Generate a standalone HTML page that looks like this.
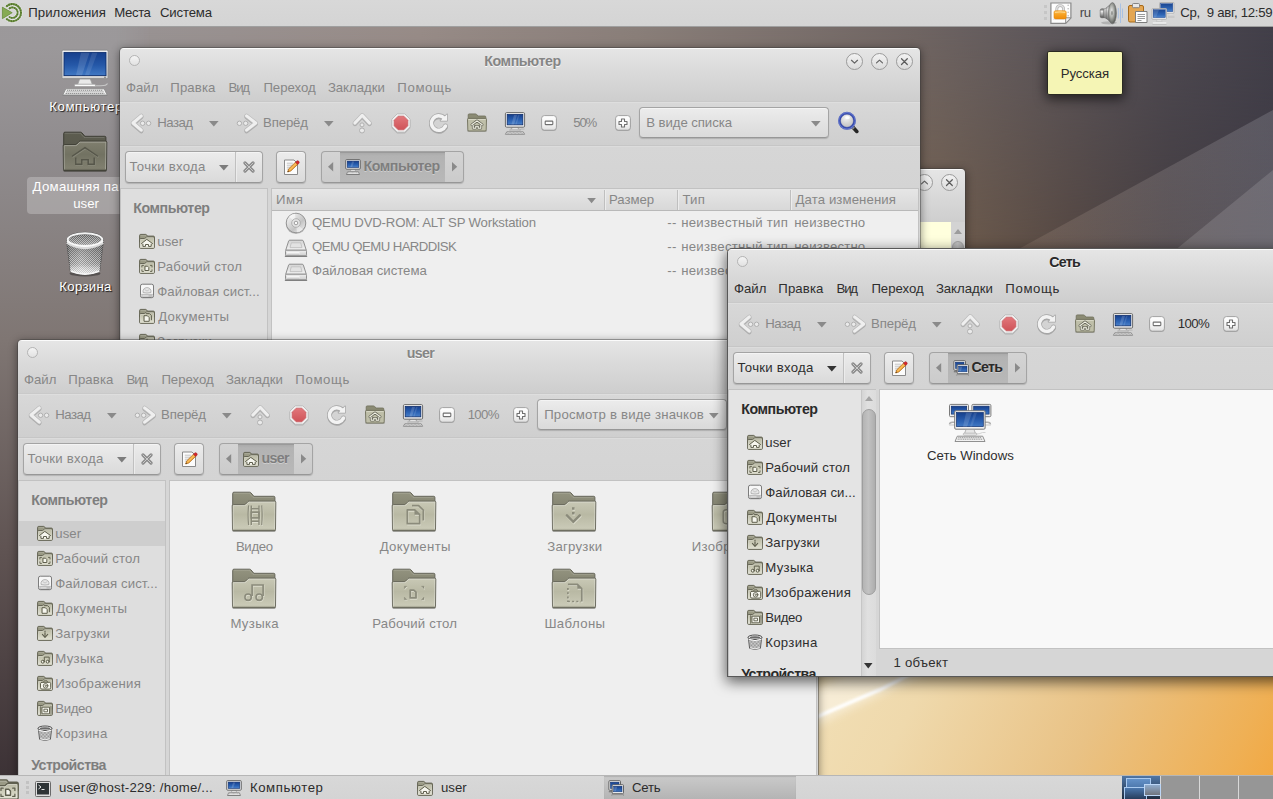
<!DOCTYPE html>
<html lang="ru"><head><meta charset="utf-8"><title>Desktop</title>
<style>
html,body{margin:0;padding:0;}
body{width:1273px;height:799px;overflow:hidden;position:relative;background:#6b625f;
 font-family:"Liberation Sans",sans-serif;font-size:13.2px;line-height:20px;color:#8b8b8b;}
.t{position:absolute;white-space:pre;line-height:20px;height:20px;}
.i{position:absolute;overflow:visible;}
div{box-sizing:border-box;}
.abs{position:absolute;}
.win{position:absolute;overflow:hidden;border-radius:4px 4px 0 0;
 background:linear-gradient(#fbfbfb 0px,#fbfbfb 1px,#e5e5e5 1.5px,#dadada 24px,#cecece 53px);
 box-shadow:0 0 0 1px rgba(60,60,60,.42),0 2px 9px 1px rgba(0,0,0,.42);}
.win.act{box-shadow:0 0 0 1px #585858,0 4px 14px 2px rgba(0,0,0,.6);}
.win .tb{position:absolute;left:0;right:0;top:53px;height:44px;border-top:1px solid #c9c9c9;
 background:linear-gradient(#d8d8d8,#cfcfcf);box-shadow:inset 0 1px 0 #dedede;}
.win .lb{position:absolute;left:0;right:0;top:97px;height:43px;border-top:1px solid #c6c6c6;
 background:linear-gradient(#d6d6d6,#d4d4d4);box-shadow:inset 0 1px 0 #dcdcdc;}
.win .body{position:absolute;left:0;right:0;top:140px;bottom:0;background:#d6d6d6;}
.btn{position:absolute;border:1px solid #a4a4a4;border-bottom-color:#979797;border-radius:4px;
 background:linear-gradient(#ececec,#dadada);box-shadow:inset 0 1px 0 #f4f4f4,0 1px 1px rgba(0,0,0,.16);}
.wb{position:absolute;width:17px;height:17px;border-radius:50%;border:1px solid #9a9a9a;
 background:linear-gradient(#f2f2f2,#dcdcdc);}
.wm{position:absolute;width:11px;height:11px;border-radius:50%;border:1px solid #b4b4b4;
 background:linear-gradient(#f4f4f4,#e2e2e2);}
.side{position:absolute;background:#dedede;border:1px solid #c2c2c2;border-bottom:none;overflow:hidden;}
.main{position:absolute;background:#efefef;border:1px solid #c2c2c2;overflow:hidden;}
.act .side{background:#e4e4e4;}
.act .main{background:#f8f8f8;}
.hdr{position:absolute;height:22px;border-bottom:1px solid #b9b9b9;
 background:linear-gradient(#e6e6e6,#d8d8d8);}
.hdr i{position:absolute;top:1px;bottom:1px;width:1px;background:#c4c4c4;box-shadow:1px 0 0 #ededed;}
.panel{position:absolute;left:0;width:1273px;background:linear-gradient(#d8d8d8,#d4d4d4);}
</style></head><body>
<svg width="0" height="0" style="position:absolute"><defs>
<symbol id="wb_min" viewBox="0 0 17 17"><path d="M5.500 7.300 L8.500 10.100 L11.500 7.300" fill="none" stroke="#666" stroke-width="1.250" stroke-linecap="round" stroke-linejoin="round"/></symbol>
<symbol id="wb_max" viewBox="0 0 17 17"><path d="M5.500 9.900 L8.500 7.100 L11.500 9.900" fill="none" stroke="#666" stroke-width="1.250" stroke-linecap="round" stroke-linejoin="round"/></symbol>
<symbol id="wb_close" viewBox="0 0 17 17"><path d="M5.500 5.700 L11.300 11.500 M11.300 5.700 L5.500 11.500" fill="none" stroke="#5c5c5c" stroke-width="1.250" stroke-linecap="round"/></symbol>
<symbol id="back" viewBox="0 0 24 24"><circle cx="13.6" cy="12.3" r="2.2" fill="#eaeaea" stroke="#b0b0b0" stroke-width="1"/><circle cx="19.6" cy="12.3" r="2.2" fill="#eaeaea" stroke="#b0b0b0" stroke-width="1"/><path d="M12.300 4.900 L4 12 L12.300 19.100" fill="none" stroke-linecap="round" stroke-linejoin="round" stroke="#7c7c7c" stroke-opacity=".45" stroke-width="4.400" transform="translate(0,1)"/><path d="M12.300 4.900 L4 12 L12.300 19.100" fill="none" stroke-linecap="round" stroke-linejoin="round" stroke="#bbbbbb" stroke-width="4.500"/><path d="M12.300 4.900 L4 12 L12.300 19.100" fill="none" stroke-linecap="round" stroke-linejoin="round" stroke="#efefef" stroke-width="3.100"/></symbol>
<symbol id="fwd" viewBox="0 0 24 24"><circle cx="4.4" cy="12.3" r="2.2" fill="#eaeaea" stroke="#b0b0b0" stroke-width="1"/><circle cx="10.7" cy="12.3" r="2.2" fill="#eaeaea" stroke="#b0b0b0" stroke-width="1"/><path d="M11.600 4.900 L20.700 12 L11.600 19.100" fill="none" stroke-linecap="round" stroke-linejoin="round" stroke="#7c7c7c" stroke-opacity=".45" stroke-width="4.400" transform="translate(0,1)"/><path d="M11.600 4.900 L20.700 12 L11.600 19.100" fill="none" stroke-linecap="round" stroke-linejoin="round" stroke="#bbbbbb" stroke-width="4.500"/><path d="M11.600 4.900 L20.700 12 L11.600 19.100" fill="none" stroke-linecap="round" stroke-linejoin="round" stroke="#efefef" stroke-width="3.100"/></symbol>
<symbol id="up" viewBox="0 0 24 24"><circle cx="12" cy="13.9" r="2" fill="#eaeaea" stroke="#b0b0b0" stroke-width="1"/><path d="M4.900 12 L12.200 4.300 L19.500 12" fill="none" stroke-linecap="round" stroke-linejoin="round" stroke="#7c7c7c" stroke-opacity=".45" stroke-width="4.400" transform="translate(0,1)"/><path d="M4.900 12 L12.200 4.300 L19.500 12" fill="none" stroke-linecap="round" stroke-linejoin="round" stroke="#bbbbbb" stroke-width="4.500"/><path d="M4.900 12 L12.200 4.300 L19.500 12" fill="none" stroke-linecap="round" stroke-linejoin="round" stroke="#efefef" stroke-width="3.100"/><circle cx="12" cy="19.5" r="2.5" fill="#eaeaea" stroke="#b0b0b0" stroke-width="1"/></symbol>
<symbol id="stop" viewBox="0 0 24 24"><defs><linearGradient id="stg" x1="0" y1="0" x2="0" y2="1"><stop offset="0" stop-color="#e2777b"/><stop offset="1" stop-color="#cf5358"/></linearGradient></defs><path d="M21.40 15.89 L15.89 21.40 L8.11 21.40 L2.60 15.89 L2.60 8.11 L8.11 2.60 L15.89 2.60 L21.40 8.11Z" fill="#777" opacity=".35" transform="translate(0,1)"/><path d="M21.20 15.81 L15.81 21.20 L8.19 21.20 L2.80 15.81 L2.80 8.19 L8.19 2.80 L15.81 2.80 L21.20 8.19Z" fill="#efefef" stroke="#b9b9b9" stroke-width=".9" stroke-linejoin="round"/><path d="M18.80 14.82 L14.82 18.80 L9.18 18.80 L5.20 14.82 L5.20 9.18 L9.18 5.20 L14.82 5.20 L18.80 9.18Z" fill="url(#stg)" stroke="#c9575c" stroke-width=".7" stroke-linejoin="round"/></symbol>
<symbol id="reload" viewBox="0 0 24 24"><g transform="translate(0,1.2)" opacity=".38"><path d="M18.47 14.97 A7.30 7.30 0 1 1 17.22 7.12" fill="none" stroke="#666" stroke-width="4.600"/><circle cx="18.47" cy="14.97" r="2.300" fill="#666"/></g><path d="M18.47 14.97 A7.30 7.30 0 1 1 17.22 7.12" fill="none" stroke="#a4a4a4" stroke-width="4.700"/><circle cx="18.47" cy="14.97" r="2.350" fill="#a4a4a4"/><path d="M20.1 3.2 L20.1 9.800 L13.4 9.800 Z" fill="#f3f3f3" stroke="#a4a4a4" stroke-width="1.500" stroke-linejoin="round"/><path d="M18.47 14.97 A7.30 7.30 0 1 1 17.22 7.12" fill="none" stroke="#f3f3f3" stroke-width="3.500"/><circle cx="18.47" cy="14.97" r="1.750" fill="#f3f3f3"/><path d="M20.1 3.2 L20.1 9.800 L13.4 9.800 Z" fill="#f3f3f3"/></symbol>
<symbol id="zout" viewBox="0 0 16 16"><defs><linearGradient id="zg" x1="0" y1="0" x2="0" y2="1"><stop offset="0" stop-color="#ffffff"/><stop offset=".6" stop-color="#f4f4f4"/><stop offset="1" stop-color="#dedede"/></linearGradient></defs><rect x=".6" y="1.200" width="14.800" height="14.800" rx="3" fill="#6a6a6a" opacity=".45"/><rect x=".6" y=".6" width="14.800" height="14.600" rx="2.800" fill="url(#zg)" stroke="#9a9a9a" stroke-width=".9"/><rect x="4.200" y="6.100" width="7.600" height="3.500" rx=".6" fill="#fdfdfd" stroke="#6f6f6f" stroke-width="1.100"/></symbol>
<symbol id="zin" viewBox="0 0 16 16"><defs><linearGradient id="zg" x1="0" y1="0" x2="0" y2="1"><stop offset="0" stop-color="#ffffff"/><stop offset=".6" stop-color="#f4f4f4"/><stop offset="1" stop-color="#dedede"/></linearGradient></defs><rect x=".6" y="1.200" width="14.800" height="14.800" rx="3" fill="#6a6a6a" opacity=".45"/><rect x=".6" y=".6" width="14.800" height="14.600" rx="2.800" fill="url(#zg)" stroke="#9a9a9a" stroke-width=".9"/><path d="M6.500 4h3v2.500h2.500v3h-2.500v2.500h-3v-2.500h-2.500v-3h2.500z" fill="#fdfdfd" stroke="#6f6f6f" stroke-width="1.100" stroke-linejoin="round"/></symbol>
<symbol id="search" viewBox="0 0 24 24"><defs><radialGradient id="sg" cx=".45" cy=".3" r=".8"><stop offset="0" stop-color="#f4f4f4"/><stop offset=".5" stop-color="#d2d2d2"/><stop offset="1" stop-color="#b4b4b8"/></radialGradient></defs><path d="M17.500 15.800 L21.800 20.400" stroke="#262626" stroke-width="3.600" stroke-linecap="round"/><path d="M17.300 15.800 L19 17.600" stroke="#8a8a8a" stroke-width="2.600"/><circle cx="12" cy="9.800" r="7.700" fill="url(#sg)" stroke="#3a4fb2" stroke-width="2.500"/><circle cx="12" cy="9.800" r="8.300" fill="none" stroke="#7f8fd8" stroke-width=".7"/><circle cx="12" cy="9.800" r="6.500" fill="none" stroke="#2a3a90" stroke-width=".5" opacity=".7"/><ellipse cx="12.500" cy="6.500" rx="2.300" ry="1.500" fill="#fff" opacity=".9"/></symbol>
<symbol id="xclear" viewBox="0 0 12 12"><path d="M2 2 L10 10 M10 2 L2 10" stroke="#8a8a8a" stroke-width="3.200" stroke-linecap="round"/><path d="M2 2 L10 10 M10 2 L2 10" stroke="#c9c9c9" stroke-width="1" stroke-linecap="round"/></symbol>
<symbol id="edit" viewBox="0 0 17 17"><path d="M1.500 1h9.500l3.500 3.500v11h-13z" fill="#6a6a6a" opacity=".25" transform="translate(0,.6)"/><path d="M1.500 1h9.500l3.500 3.500v11h-13z" fill="#fcfcfc" stroke="#8a8a8a" stroke-width="1" stroke-linejoin="round"/><path d="M3.800 4.200h6M3.800 6.200h6.500M3.800 8.200h5M3.800 10.100h3.500" stroke="#bcbcbc" stroke-width=".9"/><path d="M4.600 13 L5.700 9.900 L12.500 3.200 L14.700 5.400 L7.800 12 Z" fill="#f3a93c" stroke="#a8661a" stroke-width=".7" stroke-linejoin="round"/><path d="M6.500 11.100 L13.300 4.300" stroke="#fbd080" stroke-width=".8"/><path d="M12.500 3.200 L13.500 2.200 a1.550 1.550 0 0 1 2.200 2.200 L14.700 5.400Z" fill="#d8282c" stroke="#9a1a1e" stroke-width=".6"/><path d="M4.600 13 L5.100 11.600 L6 12.500 Z" fill="#3a2a1a"/></symbol>
<symbol id="logo" viewBox="0 0 24 24"><path d="M6.65 5.31 A8.60 8.60 0 1 1 6.65 18.09" fill="none" stroke="#e6e6e6" stroke-width="3.400" stroke-linecap="round"/><path d="M9.42 7.44 A5.20 5.20 0 1 1 9.42 15.96" fill="none" stroke="#e6e6e6" stroke-width="3.400" stroke-linecap="round"/><path d="M6.65 5.31 A8.60 8.60 0 1 1 6.65 18.09" fill="none" stroke="#6f9440" stroke-width="2" stroke-linecap="round"/><path d="M6.65 5.31 A8.60 8.60 0 1 1 6.65 18.09" fill="none" stroke="#3f5a22" stroke-width="2" stroke-dasharray="1.100 1.300" opacity=".6"/><path d="M9.42 7.44 A5.20 5.20 0 1 1 9.42 15.96" fill="none" stroke="#6f9440" stroke-width="1.900" stroke-linecap="round"/><path d="M9.42 7.44 A5.20 5.20 0 1 1 9.42 15.96" fill="none" stroke="#3f5a22" stroke-width="1.900" stroke-dasharray="1.100 1.300" opacity=".6"/><path d="M2.300 6 L12.300 11.700 L2.300 17.800Z" fill="#86ab52" stroke="#e2e2e2" stroke-width="1.500" stroke-linejoin="round" paint-order="stroke"/><path d="M2.300 6 L12.300 11.700 L2.300 17.800Z" fill="#86ab52" stroke="#5d7b38" stroke-width=".5" stroke-linejoin="round"/></symbol>
<symbol id="lock" viewBox="0 0 22 22"><path d="M.9 1h20v15l-5.200 5.400h-14.800z" fill="#fdfdfd" stroke="#8a8a8a" stroke-width="1.200" stroke-linejoin="miter"/><path d="M15.700 21.200v-5.400h5.200z" fill="#f4f4f4" stroke="#8a8a8a" stroke-width="1" stroke-linejoin="round"/><path d="M18.200 2.700v1M18.200 6.200v1M18.200 9.700v1M18.200 13.200v1" stroke="#b4b4b4" stroke-width="1.500"/><path d="M3 17.200h11" stroke="#d9dde6" stroke-width="1"/><path d="M6.800 10v-3a3.400 3.400 0 0 1 6.800 0v3" fill="none" stroke="#b0b0b0" stroke-width="2.800"/><path d="M6.800 10v-3a3.400 3.400 0 0 1 6.800 0v3" fill="none" stroke="#e0e0e0" stroke-width="1.500"/><defs><linearGradient id="lkg" x1="0" y1="0" x2="0" y2="1"><stop offset="0" stop-color="#fbc25c"/><stop offset=".45" stop-color="#f7a324"/><stop offset="1" stop-color="#ee8c08"/></linearGradient></defs><rect x="4" y="8.700" width="12.200" height="8.200" rx="1.600" fill="url(#lkg)" stroke="#e6890c" stroke-width=".6"/><path d="M5 10.500q5-1.200 10.200 0" fill="none" stroke="#fde0a0" stroke-width="1" opacity=".8"/></symbol>
<symbol id="vol" viewBox="0 0 24 24"><defs><linearGradient id="vg" x1="0" y1="0" x2="0" y2="1"><stop offset="0" stop-color="#6a6a6a"/><stop offset=".3" stop-color="#e8e8e8"/><stop offset=".55" stop-color="#b4b4b4"/><stop offset="1" stop-color="#4e4e4e"/></linearGradient><radialGradient id="vc" cx=".4" cy=".42" r=".65"><stop offset="0" stop-color="#eeeeee"/><stop offset=".45" stop-color="#a9aba6"/><stop offset="1" stop-color="#4a4c48"/></radialGradient></defs><ellipse cx="10" cy="21.800" rx="8" ry="1.600" fill="#000" opacity=".16"/><rect x="1.200" y="7.800" width="4.500" height="9" rx="1.600" fill="url(#vg)" stroke="#5a5a5a" stroke-width=".5"/><path d="M4.500 8.200 Q7 7.500 8 6.300 L12.500 2.500 V22 L8 18 Q7 17 4.500 16.400Z" fill="url(#vg)" stroke="#5a5a5a" stroke-width=".5"/><path d="M6 8v8.500M7.700 6.800v11" stroke="#4a4a4a" stroke-width=".7" opacity=".6"/><ellipse cx="13.400" cy="12.200" rx="4" ry="10.600" fill="url(#vc)" stroke="#6e6e6e" stroke-width=".6"/><ellipse cx="13" cy="12.200" rx="1.100" ry="2.600" fill="#8c8e8a" stroke="#d8d8d8" stroke-width=".4"/><path d="M19.300 7v10.500M21.500 2.500v19.500M23.500 7.500v9.500" stroke="#9fbde6" stroke-width="1" opacity=".8"/></symbol>
<symbol id="clip" viewBox="0 0 22 22"><rect x="1.500" y="3.500" width="15" height="16.500" rx="1.500" fill="#e4a652" stroke="#a86a18" stroke-width="1"/><rect x="5.500" y="1.500" width="7" height="4.200" rx="1" fill="#e8e8e8" stroke="#7a7a7a" stroke-width=".9"/><path d="M8.500 9.500h11.500v11h-11.500z" fill="#fcfcfc" stroke="#7d7d7d" stroke-width="1"/><path d="M10.500 12.500h7.500M10.500 14.500h7.500M10.500 16.500h7.500M10.500 18.500h4" stroke="#9a9a9a" stroke-width="1"/></symbol>
<symbol id="netp" viewBox="0 0 24 24"><defs><linearGradient id="npg" x1="0" y1="0" x2="0" y2="1"><stop offset="0" stop-color="#1a4590"/><stop offset=".6" stop-color="#2e64b4"/><stop offset="1" stop-color="#4f86cc"/></linearGradient></defs><rect x="8.500" y="1.500" width="14.500" height="10.800" rx=".8" fill="#ececec" stroke="#a9a9a9" stroke-width=".8"/><rect x="9.700" y="2.700" width="12.100" height="8" fill="url(#npg)" stroke="#2a4f94" stroke-width=".5"/><path d="M18.500 12.700h3l.5 1.500h-4z" fill="#dcdcdc"/><path d="M17 15.200h6.500" stroke="#d0d0d0" stroke-width="1.500"/><path d="M17 16.100h6.500" stroke="#a8a8a8" stroke-width=".5"/><rect x="1" y="7.500" width="14.500" height="10.800" rx=".8" fill="#f0f0f0" stroke="#a9a9a9" stroke-width=".8"/><rect x="2.200" y="8.700" width="12.100" height="8" fill="url(#npg)" stroke="#2a4f94" stroke-width=".5"/><path d="M3 9h5l-3 7.400h-2z" fill="#fff" opacity=".13"/><path d="M6 18.700h4.500l.7 1.800h-5.900z" fill="#e2e2e2" stroke="#b4b4b4" stroke-width=".4"/><path d="M1.800 22.200h13.500" stroke="#f0f0f0" stroke-width="1.900"/><path d="M1.500 23.300h14" stroke="#a4a4a4" stroke-width=".6"/></symbol>
<symbol id="term" viewBox="0 0 16 16"><rect x=".500" y=".500" width="15" height="15" rx="1" fill="#dedede" stroke="#6a6a6a" stroke-width="1"/><rect x="2" y="2" width="12" height="11.500" fill="#2e3436"/><path d="M3.500 4 L6 6 L3.500 8" fill="none" stroke="#e8e8e8" stroke-width="1"/><path d="M6.500 8.500h3" stroke="#e8e8e8" stroke-width="1"/></symbol>
<symbol id="showdesk" viewBox="0 0 24 24"><path d="M1 3.500q0-1 1-1h7q1 0 1.500 1l1 1.500h10q1 0 1 1v15q0 1-1 1h-19.500q-1 0-1-1z" fill="#85856f"/><path d="M1.800 8h20v13.500h-20z" fill="#bcbca6"/><path d="M10.500 18v-5.500h2.500q1.500 0 1.500 1.500v4z" fill="none" stroke="#efefe2" stroke-width="1.200"/><path d="M6 13v-2h2M18 13v-2h-2M6 16.500v2h2M18 16.500v2h-2" fill="none" stroke="#efefe2" stroke-width="1.200"/></symbol>
<symbol id="f_video" viewBox="0 0 48 48"><defs><linearGradient id="fb0" x1="0" y1="0" x2="0" y2="1"><stop offset="0" stop-color="#93937f"/><stop offset="1" stop-color="#7f7f6d"/></linearGradient><linearGradient id="ff0" x1="0" y1="0" x2="0" y2="1"><stop offset="0" stop-color="#c9c9b6"/><stop offset=".45" stop-color="#b9b9a4"/><stop offset=".9" stop-color="#c9c9b6"/><stop offset="1" stop-color="#b9b9a4"/></linearGradient></defs><path d="M3 43.300h42" stroke="#000" stroke-width="1.200" opacity=".18" stroke-linecap="round"/><path d="M2.700 5.400q0-1.200 1.200-1.200h15.700q.8 0 1.300.6l3 3.500h19.800q1.200 0 1.200 1.200v14h-42.200z" fill="url(#fb0)" stroke="#66665a" stroke-width="1" stroke-linejoin="round"/><path d="M3.800 5.300h15.600l3.600 4.100h20.400" fill="none" stroke="#fff" stroke-width=".8" opacity=".18"/><path d="M2.200 17.800q0-1.200 1.200-1.200h10.800q.8 0 1.300-.5l2.500-2.500q.5-.5 1.300-.5h25.300q1.200 0 1.200 1.200l-.3 27.400q0 1.200-1.200 1.200h-40.600q-1.200 0-1.200-1.200z" fill="url(#ff0)" stroke="#66665a" stroke-width="1" stroke-linejoin="round"/><path d="M3.200 41.500v-23.300q0-.6.600-.6h10.700q.9 0 1.500-.6l2.500-2.500q.4-.4 1-.4h24.800q.6 0 .6.600l-.25 26.500" fill="none" stroke="#fff" stroke-width=".9" opacity=".33"/><path d="M2.900 42.300h42.300" stroke="#66665a" stroke-width="1.300" opacity=".75"/><g fill="#e2e2d4" stroke="#e2e2d4" stroke-width="1.500" transform="translate(.5,.9)" opacity=".85"><path fill="none" d="M18.600 17.400q-1 10 0 19.700M31.700 17.400q1 10 0 19.700" stroke-width="1.200"/><path fill="none" d="M21.300 17.600v19.300M29 17.600v19.300" stroke-width="1.400"/><path fill="none" d="M21.300 20.800h7.700M21.300 33.300h7.700" stroke-width="1.600"/><rect fill="none" x="21.300" y="24.200" width="7.700" height="5.700" stroke-width="1.700"/></g><g fill="#8b8b7b" stroke="#8b8b7b" stroke-width="1.500"><path fill="none" d="M18.600 17.400q-1 10 0 19.700M31.700 17.400q1 10 0 19.700" stroke-width="1.200"/><path fill="none" d="M21.300 17.600v19.300M29 17.600v19.300" stroke-width="1.400"/><path fill="none" d="M21.300 20.800h7.700M21.300 33.300h7.700" stroke-width="1.600"/><rect fill="none" x="21.300" y="24.200" width="7.700" height="5.700" stroke-width="1.700"/></g></symbol>
<symbol id="f_docs" viewBox="0 0 48 48"><defs><linearGradient id="fb1" x1="0" y1="0" x2="0" y2="1"><stop offset="0" stop-color="#93937f"/><stop offset="1" stop-color="#7f7f6d"/></linearGradient><linearGradient id="ff1" x1="0" y1="0" x2="0" y2="1"><stop offset="0" stop-color="#c9c9b6"/><stop offset=".45" stop-color="#b9b9a4"/><stop offset=".9" stop-color="#c9c9b6"/><stop offset="1" stop-color="#b9b9a4"/></linearGradient></defs><path d="M3 43.300h42" stroke="#000" stroke-width="1.200" opacity=".18" stroke-linecap="round"/><path d="M2.700 5.400q0-1.200 1.200-1.200h15.700q.8 0 1.300.6l3 3.500h19.800q1.200 0 1.200 1.200v14h-42.200z" fill="url(#fb1)" stroke="#66665a" stroke-width="1" stroke-linejoin="round"/><path d="M3.800 5.300h15.600l3.600 4.100h20.400" fill="none" stroke="#fff" stroke-width=".8" opacity=".18"/><path d="M2.200 17.800q0-1.200 1.200-1.200h10.800q.8 0 1.300-.5l2.500-2.500q.5-.5 1.300-.5h25.300q1.200 0 1.200 1.200l-.3 27.400q0 1.200-1.200 1.200h-40.600q-1.200 0-1.200-1.200z" fill="url(#ff1)" stroke="#66665a" stroke-width="1" stroke-linejoin="round"/><path d="M3.200 41.500v-23.300q0-.6.600-.6h10.700q.9 0 1.500-.6l2.500-2.500q.4-.4 1-.4h24.800q.6 0 .6.600l-.25 26.500" fill="none" stroke="#fff" stroke-width=".9" opacity=".33"/><path d="M2.900 42.300h42.300" stroke="#66665a" stroke-width="1.300" opacity=".75"/><g fill="#e2e2d4" stroke="#e2e2d4" stroke-width="1.500" transform="translate(.5,.9)" opacity=".85"><path fill="none" d="M17.300 21.900h7.400l5 4.800v9h-12.400z" stroke-linejoin="round" stroke-width="1.700"/><path d="M24.500 22.200l4.800 4.600h-4.800z" stroke="none"/><path fill="none" d="M22 17.600h6.600l4.700 4.600v10.200" stroke-width="1.700" stroke-linejoin="round"/></g><g fill="#8b8b7b" stroke="#8b8b7b" stroke-width="1.500"><path fill="none" d="M17.300 21.900h7.400l5 4.800v9h-12.400z" stroke-linejoin="round" stroke-width="1.700"/><path d="M24.500 22.200l4.800 4.600h-4.800z" stroke="none"/><path fill="none" d="M22 17.600h6.600l4.700 4.600v10.200" stroke-width="1.700" stroke-linejoin="round"/></g></symbol>
<symbol id="f_down" viewBox="0 0 48 48"><defs><linearGradient id="fb2" x1="0" y1="0" x2="0" y2="1"><stop offset="0" stop-color="#93937f"/><stop offset="1" stop-color="#7f7f6d"/></linearGradient><linearGradient id="ff2" x1="0" y1="0" x2="0" y2="1"><stop offset="0" stop-color="#c9c9b6"/><stop offset=".45" stop-color="#b9b9a4"/><stop offset=".9" stop-color="#c9c9b6"/><stop offset="1" stop-color="#b9b9a4"/></linearGradient></defs><path d="M3 43.300h42" stroke="#000" stroke-width="1.200" opacity=".18" stroke-linecap="round"/><path d="M2.700 5.400q0-1.200 1.200-1.200h15.700q.8 0 1.300.6l3 3.500h19.800q1.200 0 1.200 1.200v14h-42.200z" fill="url(#fb2)" stroke="#66665a" stroke-width="1" stroke-linejoin="round"/><path d="M3.800 5.300h15.600l3.600 4.100h20.400" fill="none" stroke="#fff" stroke-width=".8" opacity=".18"/><path d="M2.200 17.800q0-1.200 1.200-1.200h10.800q.8 0 1.300-.5l2.500-2.500q.5-.5 1.300-.5h25.300q1.200 0 1.200 1.200l-.3 27.400q0 1.200-1.200 1.200h-40.600q-1.200 0-1.200-1.200z" fill="url(#ff2)" stroke="#66665a" stroke-width="1" stroke-linejoin="round"/><path d="M3.200 41.500v-23.300q0-.6.600-.6h10.700q.9 0 1.500-.6l2.500-2.500q.4-.4 1-.4h24.800q.6 0 .6.600l-.25 26.500" fill="none" stroke="#fff" stroke-width=".9" opacity=".33"/><path d="M2.900 42.300h42.300" stroke="#66665a" stroke-width="1.300" opacity=".75"/><g fill="#e2e2d4" stroke="#e2e2d4" stroke-width="1.500" transform="translate(.5,.9)" opacity=".85"><path d="M22 19.200h2.600v2.600h-2.600zM22 24h2.600v2.600h-2.600z" stroke="none"/><path fill="none" d="M16.900 27.400 L23.300 33.800 L29.800 27.400" stroke-linecap="round" stroke-linejoin="miter" stroke-width="2.500"/></g><g fill="#8b8b7b" stroke="#8b8b7b" stroke-width="1.500"><path d="M22 19.200h2.600v2.600h-2.600zM22 24h2.600v2.600h-2.600z" stroke="none"/><path fill="none" d="M16.900 27.400 L23.300 33.800 L29.800 27.400" stroke-linecap="round" stroke-linejoin="miter" stroke-width="2.500"/></g></symbol>
<symbol id="f_pics" viewBox="0 0 48 48"><defs><linearGradient id="fb3" x1="0" y1="0" x2="0" y2="1"><stop offset="0" stop-color="#93937f"/><stop offset="1" stop-color="#7f7f6d"/></linearGradient><linearGradient id="ff3" x1="0" y1="0" x2="0" y2="1"><stop offset="0" stop-color="#c9c9b6"/><stop offset=".45" stop-color="#b9b9a4"/><stop offset=".9" stop-color="#c9c9b6"/><stop offset="1" stop-color="#b9b9a4"/></linearGradient></defs><path d="M3 43.300h42" stroke="#000" stroke-width="1.200" opacity=".18" stroke-linecap="round"/><path d="M2.700 5.400q0-1.200 1.200-1.200h15.700q.8 0 1.300.6l3 3.500h19.800q1.200 0 1.200 1.200v14h-42.200z" fill="url(#fb3)" stroke="#66665a" stroke-width="1" stroke-linejoin="round"/><path d="M3.800 5.300h15.600l3.600 4.100h20.400" fill="none" stroke="#fff" stroke-width=".8" opacity=".18"/><path d="M2.200 17.800q0-1.200 1.200-1.200h10.800q.8 0 1.300-.5l2.500-2.500q.5-.5 1.300-.5h25.300q1.200 0 1.200 1.200l-.3 27.400q0 1.200-1.200 1.200h-40.600q-1.200 0-1.200-1.200z" fill="url(#ff3)" stroke="#66665a" stroke-width="1" stroke-linejoin="round"/><path d="M3.200 41.500v-23.300q0-.6.600-.6h10.700q.9 0 1.500-.6l2.500-2.500q.4-.4 1-.4h24.800q.6 0 .6.600l-.25 26.500" fill="none" stroke="#fff" stroke-width=".9" opacity=".33"/><path d="M2.900 42.300h42.300" stroke="#66665a" stroke-width="1.300" opacity=".75"/><g fill="#e2e2d4" stroke="#e2e2d4" stroke-width="1.500" transform="translate(.5,.9)" opacity=".85"><rect fill="none" x="13.200" y="21.800" width="21" height="14" rx="3"/><circle fill="none" cx="23.700" cy="28.800" r="4"/><path fill="none" d="M19.500 21.600l1.500-2.200h5.500l1.500 2.200"/></g><g fill="#8b8b7b" stroke="#8b8b7b" stroke-width="1.500"><rect fill="none" x="13.200" y="21.800" width="21" height="14" rx="3"/><circle fill="none" cx="23.700" cy="28.800" r="4"/><path fill="none" d="M19.500 21.600l1.500-2.200h5.500l1.500 2.200"/></g></symbol>
<symbol id="f_music" viewBox="0 0 48 48"><defs><linearGradient id="fb4" x1="0" y1="0" x2="0" y2="1"><stop offset="0" stop-color="#93937f"/><stop offset="1" stop-color="#7f7f6d"/></linearGradient><linearGradient id="ff4" x1="0" y1="0" x2="0" y2="1"><stop offset="0" stop-color="#c9c9b6"/><stop offset=".45" stop-color="#b9b9a4"/><stop offset=".9" stop-color="#c9c9b6"/><stop offset="1" stop-color="#b9b9a4"/></linearGradient></defs><path d="M3 43.300h42" stroke="#000" stroke-width="1.200" opacity=".18" stroke-linecap="round"/><path d="M2.700 5.400q0-1.200 1.200-1.200h15.700q.8 0 1.300.6l3 3.500h19.800q1.200 0 1.200 1.200v14h-42.200z" fill="url(#fb4)" stroke="#66665a" stroke-width="1" stroke-linejoin="round"/><path d="M3.800 5.300h15.600l3.600 4.100h20.400" fill="none" stroke="#fff" stroke-width=".8" opacity=".18"/><path d="M2.200 17.800q0-1.200 1.200-1.200h10.800q.8 0 1.300-.5l2.500-2.500q.5-.5 1.300-.5h25.300q1.200 0 1.200 1.200l-.3 27.400q0 1.200-1.200 1.200h-40.600q-1.200 0-1.200-1.200z" fill="url(#ff4)" stroke="#66665a" stroke-width="1" stroke-linejoin="round"/><path d="M3.200 41.500v-23.300q0-.6.600-.6h10.700q.9 0 1.500-.6l2.500-2.500q.4-.4 1-.4h24.800q.6 0 .6.600l-.25 26.500" fill="none" stroke="#fff" stroke-width=".9" opacity=".33"/><path d="M2.900 42.300h42.300" stroke="#66665a" stroke-width="1.300" opacity=".75"/><g fill="#e2e2d4" stroke="#e2e2d4" stroke-width="1.500" transform="translate(.5,.9)" opacity=".85"><circle fill="none" cx="18.100" cy="32.200" r="3.200" stroke-width="1.600"/><circle fill="none" cx="29.200" cy="32.200" r="3.200" stroke-width="1.600"/><path fill="none" d="M22.100 31v-11h11v11" stroke-linejoin="miter" stroke-width="1.700"/></g><g fill="#8b8b7b" stroke="#8b8b7b" stroke-width="1.500"><circle fill="none" cx="18.100" cy="32.200" r="3.200" stroke-width="1.600"/><circle fill="none" cx="29.200" cy="32.200" r="3.200" stroke-width="1.600"/><path fill="none" d="M22.100 31v-11h11v11" stroke-linejoin="miter" stroke-width="1.700"/></g></symbol>
<symbol id="f_desk" viewBox="0 0 48 48"><defs><linearGradient id="fb5" x1="0" y1="0" x2="0" y2="1"><stop offset="0" stop-color="#93937f"/><stop offset="1" stop-color="#7f7f6d"/></linearGradient><linearGradient id="ff5" x1="0" y1="0" x2="0" y2="1"><stop offset="0" stop-color="#c9c9b6"/><stop offset=".45" stop-color="#b9b9a4"/><stop offset=".9" stop-color="#c9c9b6"/><stop offset="1" stop-color="#b9b9a4"/></linearGradient></defs><path d="M3 43.300h42" stroke="#000" stroke-width="1.200" opacity=".18" stroke-linecap="round"/><path d="M2.700 5.400q0-1.200 1.200-1.200h15.700q.8 0 1.300.6l3 3.500h19.800q1.200 0 1.200 1.200v14h-42.200z" fill="url(#fb5)" stroke="#66665a" stroke-width="1" stroke-linejoin="round"/><path d="M3.800 5.300h15.600l3.600 4.100h20.400" fill="none" stroke="#fff" stroke-width=".8" opacity=".18"/><path d="M2.200 17.800q0-1.200 1.200-1.200h10.800q.8 0 1.300-.5l2.500-2.500q.5-.5 1.300-.5h25.300q1.200 0 1.200 1.200l-.3 27.400q0 1.200-1.200 1.200h-40.600q-1.200 0-1.200-1.200z" fill="url(#ff5)" stroke="#66665a" stroke-width="1" stroke-linejoin="round"/><path d="M3.200 41.500v-23.300q0-.6.600-.6h10.700q.9 0 1.500-.6l2.500-2.500q.4-.4 1-.4h24.800q.6 0 .6.600l-.25 26.500" fill="none" stroke="#fff" stroke-width=".9" opacity=".33"/><path d="M2.900 42.300h42.300" stroke="#66665a" stroke-width="1.300" opacity=".75"/><g fill="#e2e2d4" stroke="#e2e2d4" stroke-width="1.500" transform="translate(.5,.9)" opacity=".85"><path fill="none" d="M20.200 25.200h3.600l2.200 2v5.700h-5.800z" stroke-linejoin="round" stroke-width="1.800"/><path d="M14.300 21.200h2.600l-2.600 2.600zM34 21.200h-2.600l2.600 2.600zM14.300 34.700h2.600l-2.600-2.600zM34 34.700h-2.600l2.600-2.600z" stroke-width=".3"/></g><g fill="#8b8b7b" stroke="#8b8b7b" stroke-width="1.500"><path fill="none" d="M20.200 25.200h3.600l2.200 2v5.700h-5.800z" stroke-linejoin="round" stroke-width="1.800"/><path d="M14.300 21.200h2.600l-2.600 2.600zM34 21.200h-2.600l2.600 2.600zM14.300 34.700h2.600l-2.600-2.600zM34 34.700h-2.600l2.600-2.600z" stroke-width=".3"/></g></symbol>
<symbol id="f_tmpl" viewBox="0 0 48 48"><defs><linearGradient id="fb6" x1="0" y1="0" x2="0" y2="1"><stop offset="0" stop-color="#93937f"/><stop offset="1" stop-color="#7f7f6d"/></linearGradient><linearGradient id="ff6" x1="0" y1="0" x2="0" y2="1"><stop offset="0" stop-color="#c9c9b6"/><stop offset=".45" stop-color="#b9b9a4"/><stop offset=".9" stop-color="#c9c9b6"/><stop offset="1" stop-color="#b9b9a4"/></linearGradient></defs><path d="M3 43.300h42" stroke="#000" stroke-width="1.200" opacity=".18" stroke-linecap="round"/><path d="M2.700 5.400q0-1.200 1.200-1.200h15.700q.8 0 1.300.6l3 3.500h19.800q1.200 0 1.200 1.200v14h-42.200z" fill="url(#fb6)" stroke="#66665a" stroke-width="1" stroke-linejoin="round"/><path d="M3.800 5.300h15.600l3.600 4.100h20.400" fill="none" stroke="#fff" stroke-width=".8" opacity=".18"/><path d="M2.200 17.800q0-1.200 1.200-1.200h10.800q.8 0 1.300-.5l2.500-2.500q.5-.5 1.300-.5h25.300q1.200 0 1.200 1.200l-.3 27.400q0 1.200-1.200 1.200h-40.600q-1.200 0-1.200-1.200z" fill="url(#ff6)" stroke="#66665a" stroke-width="1" stroke-linejoin="round"/><path d="M3.200 41.500v-23.300q0-.6.600-.6h10.700q.9 0 1.500-.6l2.500-2.500q.4-.4 1-.4h24.800q.6 0 .6.600l-.25 26.500" fill="none" stroke="#fff" stroke-width=".9" opacity=".33"/><path d="M2.900 42.300h42.300" stroke="#66665a" stroke-width="1.300" opacity=".75"/><g fill="#e2e2d4" stroke="#e2e2d4" stroke-width="1.500" transform="translate(.5,.9)" opacity=".85"><path fill="none" d="M17.900 19.300h9.600l4.300 4.200v13" stroke-width="1.700" stroke-linejoin="round"/><path d="M27.300 19.500l4.400 4.300h-4.400z" stroke="none"/><path fill="none" d="M17.900 23v14M17.900 36.500h13" stroke-width="1.700" stroke-dasharray="2 2.200"/></g><g fill="#8b8b7b" stroke="#8b8b7b" stroke-width="1.500"><path fill="none" d="M17.900 19.300h9.600l4.300 4.200v13" stroke-width="1.700" stroke-linejoin="round"/><path d="M27.300 19.500l4.400 4.300h-4.400z" stroke="none"/><path fill="none" d="M17.900 23v14M17.900 36.500h13" stroke-width="1.700" stroke-dasharray="2 2.200"/></g></symbol>
<symbol id="f_home_d" viewBox="0 0 48 48"><defs><linearGradient id="fb7" x1="0" y1="0" x2="0" y2="1"><stop offset="0" stop-color="#5d5d50"/><stop offset="1" stop-color="#57574b"/></linearGradient><linearGradient id="ff7" x1="0" y1="0" x2="0" y2="1"><stop offset="0" stop-color="#807f6f"/><stop offset=".45" stop-color="#727262"/><stop offset=".9" stop-color="#807f6f"/><stop offset="1" stop-color="#727262"/></linearGradient></defs><path d="M3 43.300h42" stroke="#000" stroke-width="1.200" opacity=".18" stroke-linecap="round"/><path d="M2.700 5.400q0-1.200 1.200-1.200h15.700q.8 0 1.300.6l3 3.500h19.800q1.200 0 1.200 1.200v14h-42.200z" fill="url(#fb7)" stroke="#3e3e35" stroke-width="1" stroke-linejoin="round"/><path d="M3.800 5.300h15.600l3.600 4.100h20.400" fill="none" stroke="#fff" stroke-width=".8" opacity=".18"/><path d="M2.200 17.800q0-1.200 1.200-1.200h10.800q.8 0 1.300-.5l2.500-2.500q.5-.5 1.300-.5h25.300q1.200 0 1.200 1.200l-.3 27.400q0 1.200-1.200 1.200h-40.600q-1.200 0-1.200-1.200z" fill="url(#ff7)" stroke="#3e3e35" stroke-width="1" stroke-linejoin="round"/><path d="M3.200 41.500v-23.300q0-.6.600-.6h10.700q.9 0 1.500-.6l2.500-2.500q.4-.4 1-.4h24.800q.6 0 .6.600l-.25 26.500" fill="none" stroke="#fff" stroke-width=".9" opacity=".33"/><path d="M2.900 42.300h42.300" stroke="#3e3e35" stroke-width="1.300" opacity=".75"/><g fill="#8c8c7e" stroke="#8c8c7e" stroke-width="1.500" transform="translate(.5,.9)" opacity=".85"><path fill="none" d="M11.500 28 L24 19.600 L36.500 28" stroke-linecap="round" stroke-linejoin="round"/><path fill="none" d="M14.800 29.500v6.700h6v-4.500h6.400v4.500h6v-6.700" stroke-linejoin="miter"/></g><g fill="#56564a" stroke="#56564a" stroke-width="1.500"><path fill="none" d="M11.500 28 L24 19.600 L36.500 28" stroke-linecap="round" stroke-linejoin="round"/><path fill="none" d="M14.800 29.500v6.700h6v-4.500h6.400v4.500h6v-6.700" stroke-linejoin="miter"/></g></symbol>
<symbol id="s_home" viewBox="0 0 16 16"><defs><linearGradient id="f16g" x1="0" y1="0" x2="0" y2="1"><stop offset="0" stop-color="#b7b7a2"/><stop offset=".5" stop-color="#cdcdb9"/><stop offset="1" stop-color="#e4e4d6"/></linearGradient></defs><path d="M.6 2.500q0-1.100 1.100-1.100h5q.6 0 .9.500l.8 1.200h6q1 0 1 1v5h-14.800z" fill="#9a9a85" stroke="#5f5f4e" stroke-width=".95" stroke-linejoin="round"/><path d="M1.600 2.400h5l1.100 1.700h6.800" fill="none" stroke="#fff" stroke-width=".7" opacity=".22"/><path d="M.6 6.500q0-1 1-1h3.600q.5 0 .9-.3l1.200-1q.4-.4 1-.4h6.100q1 0 1 1v9.600q0 1-1 1h-12.800q-1 0-1-1z" fill="url(#f16g)" stroke="#5f5f4e" stroke-width=".95" stroke-linejoin="round"/><path d="M1.500 14.500v-7.600q0-.5.500-.5h3.400q.6 0 1-.4l1.300-1.100q.3-.2.700-.2h5.700q.4 0 .4.400v9.400" fill="none" stroke="#fff" stroke-width=".7" opacity=".35"/><g fill="#f6f6ee" stroke="none"><path d="M2.800 10.600 L7.800 6.600 L13.200 10.600 L12.300 11v2.400h-8.500v-2.400z"/></g><g fill="none" stroke="#5f5f4e" stroke-width="1" stroke-linejoin="round" stroke-linecap="round"><path d="M2.500 10.500 L7.800 6.400 L13.500 10.500"/><path d="M3.900 11.200v2.200h2.600v-1.900h3v1.900h2.700v-2.200"/></g></symbol>
<symbol id="s_desk" viewBox="0 0 16 16"><defs><linearGradient id="f16g" x1="0" y1="0" x2="0" y2="1"><stop offset="0" stop-color="#b7b7a2"/><stop offset=".5" stop-color="#cdcdb9"/><stop offset="1" stop-color="#e4e4d6"/></linearGradient></defs><path d="M.6 2.500q0-1.100 1.100-1.100h5q.6 0 .9.500l.8 1.200h6q1 0 1 1v5h-14.800z" fill="#9a9a85" stroke="#5f5f4e" stroke-width=".95" stroke-linejoin="round"/><path d="M1.600 2.400h5l1.100 1.700h6.800" fill="none" stroke="#fff" stroke-width=".7" opacity=".22"/><path d="M.6 6.500q0-1 1-1h3.600q.5 0 .9-.3l1.200-1q.4-.4 1-.4h6.100q1 0 1 1v9.600q0 1-1 1h-12.800q-1 0-1-1z" fill="url(#f16g)" stroke="#5f5f4e" stroke-width=".95" stroke-linejoin="round"/><path d="M1.500 14.500v-7.600q0-.5.500-.5h3.400q.6 0 1-.4l1.300-1.100q.3-.2.700-.2h5.700q.4 0 .4.400v9.400" fill="none" stroke="#fff" stroke-width=".7" opacity=".35"/><g fill="#f6f6ee" stroke="none"><path d="M6.300 8.200h2.300l1.200 1.200v3.100h-3.500z"/></g><g fill="none" stroke="#5f5f4e" stroke-width="1" stroke-linejoin="round" stroke-linecap="round"><path d="M6.300 8.200h2.200l1.300 1.300v3h-3.500z"/><path d="M2.900 9v-1.600h1.600M13 9v-1.600h-1.600M2.900 11.800v1.600h1.600M13 11.800v1.600h-1.600" stroke-width=".9"/></g></symbol>
<symbol id="s_docs" viewBox="0 0 16 16"><defs><linearGradient id="f16g" x1="0" y1="0" x2="0" y2="1"><stop offset="0" stop-color="#b7b7a2"/><stop offset=".5" stop-color="#cdcdb9"/><stop offset="1" stop-color="#e4e4d6"/></linearGradient></defs><path d="M.6 2.500q0-1.100 1.100-1.100h5q.6 0 .9.500l.8 1.200h6q1 0 1 1v5h-14.800z" fill="#9a9a85" stroke="#5f5f4e" stroke-width=".95" stroke-linejoin="round"/><path d="M1.600 2.400h5l1.100 1.700h6.800" fill="none" stroke="#fff" stroke-width=".7" opacity=".22"/><path d="M.6 6.500q0-1 1-1h3.600q.5 0 .9-.3l1.200-1q.4-.4 1-.4h6.100q1 0 1 1v9.600q0 1-1 1h-12.800q-1 0-1-1z" fill="url(#f16g)" stroke="#5f5f4e" stroke-width=".95" stroke-linejoin="round"/><path d="M1.500 14.500v-7.600q0-.5.500-.5h3.400q.6 0 1-.4l1.300-1.100q.3-.2.700-.2h5.700q.4 0 .4.400v9.400" fill="none" stroke="#fff" stroke-width=".7" opacity=".35"/><g fill="#f6f6ee" stroke="none"><path d="M5.400 7.700h3l1.800 1.800v3.800h-4.800z"/></g><g fill="none" stroke="#5f5f4e" stroke-width="1" stroke-linejoin="round" stroke-linecap="round"><path d="M5.400 7.700h2.900l1.900 1.900v3.700h-4.800z"/><path d="M7.500 5.600h3l1.900 1.900v4.300"/></g></symbol>
<symbol id="s_down" viewBox="0 0 16 16"><defs><linearGradient id="f16g" x1="0" y1="0" x2="0" y2="1"><stop offset="0" stop-color="#b7b7a2"/><stop offset=".5" stop-color="#cdcdb9"/><stop offset="1" stop-color="#e4e4d6"/></linearGradient></defs><path d="M.6 2.500q0-1.100 1.100-1.100h5q.6 0 .9.500l.8 1.200h6q1 0 1 1v5h-14.800z" fill="#9a9a85" stroke="#5f5f4e" stroke-width=".95" stroke-linejoin="round"/><path d="M1.600 2.400h5l1.100 1.700h6.800" fill="none" stroke="#fff" stroke-width=".7" opacity=".22"/><path d="M.6 6.500q0-1 1-1h3.600q.5 0 .9-.3l1.200-1q.4-.4 1-.4h6.100q1 0 1 1v9.600q0 1-1 1h-12.800q-1 0-1-1z" fill="url(#f16g)" stroke="#5f5f4e" stroke-width=".95" stroke-linejoin="round"/><path d="M1.500 14.500v-7.600q0-.5.500-.5h3.400q.6 0 1-.4l1.300-1.100q.3-.2.700-.2h5.700q.4 0 .4.400v9.400" fill="none" stroke="#fff" stroke-width=".7" opacity=".35"/><g fill="#f6f6ee" stroke="none"></g><g fill="none" stroke="#5f5f4e" stroke-width="1" stroke-linejoin="round" stroke-linecap="round"><path d="M8 6v.6M8 7.800v2.600" stroke-width="1.200"/><path d="M5.400 9.300 L8 12.300 L10.700 9.300" stroke-width="1.100"/></g></symbol>
<symbol id="s_music" viewBox="0 0 16 16"><defs><linearGradient id="f16g" x1="0" y1="0" x2="0" y2="1"><stop offset="0" stop-color="#b7b7a2"/><stop offset=".5" stop-color="#cdcdb9"/><stop offset="1" stop-color="#e4e4d6"/></linearGradient></defs><path d="M.6 2.500q0-1.100 1.100-1.100h5q.6 0 .9.500l.8 1.200h6q1 0 1 1v5h-14.800z" fill="#9a9a85" stroke="#5f5f4e" stroke-width=".95" stroke-linejoin="round"/><path d="M1.600 2.400h5l1.100 1.700h6.800" fill="none" stroke="#fff" stroke-width=".7" opacity=".22"/><path d="M.6 6.500q0-1 1-1h3.600q.5 0 .9-.3l1.200-1q.4-.4 1-.4h6.100q1 0 1 1v9.600q0 1-1 1h-12.800q-1 0-1-1z" fill="url(#f16g)" stroke="#5f5f4e" stroke-width=".95" stroke-linejoin="round"/><path d="M1.500 14.500v-7.600q0-.5.500-.5h3.400q.6 0 1-.4l1.300-1.100q.3-.2.700-.2h5.700q.4 0 .4.400v9.400" fill="none" stroke="#fff" stroke-width=".7" opacity=".35"/><g fill="#f6f6ee" stroke="none"><circle cx="5.800" cy="11.700" r="1"/><circle cx="10.700" cy="11.700" r="1"/></g><g fill="none" stroke="#5f5f4e" stroke-width="1" stroke-linejoin="round" stroke-linecap="round"><circle cx="5.800" cy="11.700" r="1.500"/><circle cx="10.700" cy="11.700" r="1.500"/><path d="M7.300 11.400v-4.300h4.900v4.300"/></g></symbol>
<symbol id="s_pics" viewBox="0 0 16 16"><defs><linearGradient id="f16g" x1="0" y1="0" x2="0" y2="1"><stop offset="0" stop-color="#b7b7a2"/><stop offset=".5" stop-color="#cdcdb9"/><stop offset="1" stop-color="#e4e4d6"/></linearGradient></defs><path d="M.6 2.500q0-1.100 1.100-1.100h5q.6 0 .9.500l.8 1.200h6q1 0 1 1v5h-14.800z" fill="#9a9a85" stroke="#5f5f4e" stroke-width=".95" stroke-linejoin="round"/><path d="M1.600 2.400h5l1.100 1.700h6.800" fill="none" stroke="#fff" stroke-width=".7" opacity=".22"/><path d="M.6 6.500q0-1 1-1h3.600q.5 0 .9-.3l1.200-1q.4-.4 1-.4h6.100q1 0 1 1v9.600q0 1-1 1h-12.800q-1 0-1-1z" fill="url(#f16g)" stroke="#5f5f4e" stroke-width=".95" stroke-linejoin="round"/><path d="M1.500 14.500v-7.600q0-.5.500-.5h3.400q.6 0 1-.4l1.300-1.100q.3-.2.700-.2h5.700q.4 0 .4.400v9.400" fill="none" stroke="#fff" stroke-width=".7" opacity=".35"/><g fill="#f6f6ee" stroke="none"><rect x="3.500" y="7.300" width="10.200" height="6.800" rx="1.400"/></g><g fill="none" stroke="#5f5f4e" stroke-width="1" stroke-linejoin="round" stroke-linecap="round"><rect x="3.500" y="7.300" width="10.200" height="6.800" rx="1.400"/><circle cx="8.600" cy="10.800" r="2.300" stroke-width=".9"/><circle cx="8.600" cy="10.800" r=".7" stroke-width=".7"/><path d="M6.600 7.100l.6-1.300h2.800l.6 1.300" stroke-width=".9"/></g></symbol>
<symbol id="s_video" viewBox="0 0 16 16"><defs><linearGradient id="f16g" x1="0" y1="0" x2="0" y2="1"><stop offset="0" stop-color="#b7b7a2"/><stop offset=".5" stop-color="#cdcdb9"/><stop offset="1" stop-color="#e4e4d6"/></linearGradient></defs><path d="M.6 2.500q0-1.100 1.100-1.100h5q.6 0 .9.500l.8 1.200h6q1 0 1 1v5h-14.800z" fill="#9a9a85" stroke="#5f5f4e" stroke-width=".95" stroke-linejoin="round"/><path d="M1.600 2.400h5l1.100 1.700h6.800" fill="none" stroke="#fff" stroke-width=".7" opacity=".22"/><path d="M.6 6.500q0-1 1-1h3.600q.5 0 .9-.3l1.200-1q.4-.4 1-.4h6.100q1 0 1 1v9.600q0 1-1 1h-12.800q-1 0-1-1z" fill="url(#f16g)" stroke="#5f5f4e" stroke-width=".95" stroke-linejoin="round"/><path d="M1.500 14.500v-7.600q0-.5.500-.5h3.400q.6 0 1-.4l1.300-1.100q.3-.2.700-.2h5.700q.4 0 .4.400v9.400" fill="none" stroke="#fff" stroke-width=".7" opacity=".35"/><g fill="#f6f6ee" stroke="none"><rect x="5.300" y="7.200" width="7.200" height="6.600"/></g><g fill="none" stroke="#5f5f4e" stroke-width="1" stroke-linejoin="round" stroke-linecap="round"><path d="M3.700 6.600v7.800M14 6.600v7.800" stroke-width=".9"/><rect x="5.300" y="7.200" width="7.200" height="6.600" stroke-width=".95"/><rect x="7.300" y="9.200" width="3.200" height="2.600" stroke-width=".9"/></g></symbol>
<symbol id="s_drive" viewBox="0 0 16 16"><rect x="1.600" y="1.800" width="13" height="13.400" rx="1.800" fill="#444" opacity=".45"/><rect x="1.500" y="1.200" width="13" height="13.300" rx="1.800" fill="#f7f7f7" stroke="#7c7c7c" stroke-width="1"/><path d="M2.200 11.400h11.600" stroke="#a8a8a8" stroke-width=".8"/><rect x="2.300" y="11.800" width="11.400" height="2.200" rx=".8" fill="#c0c0c0"/><path d="M3.500 12.900h6" stroke="#f2f2f2" stroke-width=".8"/><path d="M4 9.500 Q3.600 4.800 8 4.600 Q12.400 4.800 12 9.500 Q8 10.600 4 9.500Z" fill="#e6e6e6" stroke="#b0b0b0" stroke-width=".9"/><path d="M5.500 6.400 L8 8.100 L10.500 6.400" fill="none" stroke="#bdbdbd" stroke-width=".8"/></symbol>
<symbol id="s_trash" viewBox="0 0 16 16"><defs><pattern id="t16p" width="1.400" height="1.400" patternUnits="userSpaceOnUse"><rect width=".7" height=".7" fill="#4a4a4a"/><rect x=".7" y=".7" width=".7" height=".7" fill="#4a4a4a"/></pattern></defs><path d="M1.300 3.500 L2.600 14.300 Q8 16.500 13.400 14.300 L14.700 3.500Z" fill="#d9d9d9" stroke="#4f4f4f" stroke-width=".9" stroke-linejoin="round"/><path d="M2.200 5.500 L3.200 13.800 Q8 15.600 12.800 13.800 L13.800 5.500Z" fill="url(#t16p)" opacity=".55"/><path d="M3 13.900 Q8 15.700 13 13.900" fill="none" stroke="#f4f4f4" stroke-width=".9"/><ellipse cx="8" cy="3.300" rx="7" ry="2.300" fill="#ededed" stroke="#3f3f3f" stroke-width=".9"/><ellipse cx="8" cy="3.400" rx="5.200" ry="1.200" fill="#6a6a6a"/><path d="M1.500 5.200 Q8 8 14.500 5.200" fill="none" stroke="#fafafa" stroke-width="1"/></symbol>
<symbol id="comp48" viewBox="0 0 48 48"><defs><linearGradient id="cs8" x1="0" y1="0" x2="0" y2="1"><stop offset="0" stop-color="#163f8c"/><stop offset=".55" stop-color="#2558a8"/><stop offset="1" stop-color="#4179c4"/></linearGradient><linearGradient id="cf8" x1="0" y1="0" x2="0" y2="1"><stop offset="0" stop-color="#fafafa"/><stop offset="1" stop-color="#d4d4d4"/></linearGradient></defs><path d="M32 37.800h8q5.500 0 6.500-2.200" fill="none" stroke="#c9c9c9" stroke-width="1.100"/><path d="M18.700 30.800h10.600l2.200 6h-15z" fill="#e9e9e9" stroke="#9a9a9a" stroke-width=".8"/><rect x="13.500" y="36.200" width="21" height="2.300" rx="1.100" fill="#fcfcfc" stroke="#9c9c9c" stroke-width=".7"/><rect x=".9" y="2.100" width="46.200" height="28.600" rx="1.300" fill="url(#cf8)" stroke="#8a8a8a" stroke-width="1"/><rect x="3" y="4.400" width="42" height="23.200" fill="url(#cs8)" stroke="#0f2f6e" stroke-width=".9"/><path d="M20 4.800h8.500l-7.500 22.400h-6z" fill="#fff" opacity=".13"/><path d="M31 4.800h5.500l-8.500 22.400h-4z" fill="#fff" opacity=".10"/><circle cx="44" cy="29.200" r=".7" fill="#555"/><path d="M1.700 47.600h44.600" stroke="#777" stroke-width=".9" opacity=".7"/><path d="M4.800 40.800h38.400l3 6.200h-44.400z" fill="#f1f1f1" stroke="#8c8c8c" stroke-width=".9" stroke-linejoin="round"/><path d="M6 42.300h36M5.300 43.900h37.400M4.600 45.500h38.800" stroke="#8a8a8a" stroke-width="1" stroke-dasharray="1.300 .7"/></symbol>
<symbol id="tb_comp" viewBox="0 0 24 24"><defs><linearGradient id="cs9" x1="0" y1="0" x2="0" y2="1"><stop offset="0" stop-color="#163f8c"/><stop offset=".55" stop-color="#2b62b4"/><stop offset="1" stop-color="#4a80c8"/></linearGradient></defs><path d="M14 19.300q3 0 4-1.200h3.500" fill="none" stroke="#b0b0b0" stroke-width=".8"/><path d="M9.200 16h5.600l1 3h-7.600z" fill="#f0f0f0" stroke="#8d8d8d" stroke-width=".7"/><rect x="6.800" y="18.300" width="10.400" height="1.500" rx=".7" fill="#fcfcfc" stroke="#8a8a8a" stroke-width=".6"/><rect x="2.400" y="1.600" width="19.200" height="14.600" rx="1.200" fill="#ededed" stroke="#6c6c6c" stroke-width="1"/><rect x="4.200" y="3.500" width="15.600" height="10.300" fill="url(#cs9)" stroke="#0f2f6e" stroke-width=".8"/><path d="M11 3.900h3l-3 9.500h-2.600z" fill="#fff" opacity=".16"/><path d="M15 3.900h1.600l-3 9.500h-1.300z" fill="#fff" opacity=".12"/><path d="M3.800 20.800h16.400l1.400 2.500h-19.200z" fill="#f6f6f6" stroke="#7a7a7a" stroke-width=".8" stroke-linejoin="round"/><path d="M4.400 21.600h15.200M3.800 22.500h16.400" stroke="#8a8a8a" stroke-width=".6" stroke-dasharray=".9 .5"/></symbol>
<symbol id="comp16" viewBox="0 0 16 16"><defs><linearGradient id="cs10" x1="0" y1="0" x2="0" y2="1"><stop offset="0" stop-color="#163f8c"/><stop offset=".6" stop-color="#2b62b4"/><stop offset="1" stop-color="#4a80c8"/></linearGradient></defs><path d="M6 10.200h4l.6 2h-5.200z" fill="#ededed" stroke="#8a8a8a" stroke-width=".5"/><rect x=".7" y=".6" width="14.600" height="9.600" rx="1" fill="#ededed" stroke="#5e5e5e" stroke-width=".9"/><rect x="2.200" y="2.100" width="11.600" height="6.300" fill="url(#cs10)" stroke="#0f2f6e" stroke-width=".6"/><path d="M7 2.400h2.200l-2 5.700h-1.800z" fill="#fff" opacity=".16"/><path d="M1.600 15.600h12.800" stroke="#555" stroke-width=".8"/><path d="M2.600 12.800h10.800l1 2.500h-12.800z" fill="#fafafa" stroke="#6a6a6a" stroke-width=".7" stroke-linejoin="round"/><path d="M3.200 13.700h9.600" stroke="#8a8a8a" stroke-width=".6" stroke-dasharray=".8 .5"/></symbol>
<symbol id="tb_home" viewBox="0 0 20 19"><path d="M.4 17.400h19.200" stroke="#4e4e40" stroke-width="1.200" opacity=".55"/><path d="M1.200 1.400q0-1 1-1h6.300q.9 0 1.400.8l.9 1.300h7q1 0 1 1v5h-17.600z" fill="#8b8b74" stroke="#6f6f5b" stroke-width=".8"/><path d="M.5 6q0-1.100 1.100-1.100h16.800q1.100 0 1.100 1.100l-.3 10.400q0 1.100-1.100 1.100h-16.200q-1.100 0-1.100-1.100z" fill="#bfbfa9" stroke="#6f6f5b" stroke-width=".9"/><path d="M1.500 6h17" stroke="#dcdccb" stroke-width=".8"/><g fill="none" stroke="#67675a" stroke-width="2.600" stroke-linejoin="round" stroke-linecap="round"><path d="M4.800 11.300 L10 7.400 L15.200 11.300"/><path d="M6.200 11.800v2.900h2.600v-2h2.400v2h2.600v-2.900"/></g><g fill="none" stroke="#f3f3e6" stroke-width="1.100" stroke-linejoin="round" stroke-linecap="round"><path d="M4.800 11.300 L10 7.400 L15.200 11.300"/><path d="M6.200 11.800v2.900h2.600v-2h2.400v2h2.600v-2.900"/></g></symbol>
<symbol id="trash48" viewBox="0 0 48 48"><defs><linearGradient id="tr11" x1="0" y1="0" x2="1" y2="0"><stop offset="0" stop-color="#5e5e5e"/><stop offset=".12" stop-color="#9a9a9a"/><stop offset=".4" stop-color="#b9b9b9"/><stop offset=".7" stop-color="#9c9c9c"/><stop offset=".9" stop-color="#8a8a8a"/><stop offset="1" stop-color="#555"/></linearGradient><linearGradient id="tb11" x1="0" y1="0" x2="0" y2="1"><stop offset=".25" stop-color="#555" stop-opacity=".35"/><stop offset=".6" stop-color="#777" stop-opacity=".1"/><stop offset=".8" stop-color="#fff" stop-opacity=".35"/><stop offset="1" stop-color="#fff" stop-opacity=".7"/></linearGradient><linearGradient id="ti11" x1="0" y1="0" x2="0" y2="1"><stop offset="0" stop-color="#5c5c5c"/><stop offset="1" stop-color="#b4b4b4"/></linearGradient><pattern id="tp11" width="2" height="2" patternUnits="userSpaceOnUse"><rect width="1" height="1" fill="#fff" opacity=".5"/><rect x="1" y="1" width="1" height="1" fill="#fff" opacity=".5"/><rect x="1" width="1" height="1" fill="#000" opacity=".16"/><rect y="1" width="1" height="1" fill="#000" opacity=".16"/></pattern></defs><ellipse cx="24" cy="44.500" rx="15.500" ry="3" fill="#000" opacity=".35"/><path d="M5.600 12 L9.400 42.500 Q24 48.500 38.600 42.500 L42.400 12 Z" fill="url(#tr11)" stroke="#4e4e4e" stroke-width=".8"/><path d="M5.600 12 L9.400 42.500 Q24 48.500 38.600 42.500 L42.400 12 Z" fill="url(#tp11)"/><path d="M5.600 12 L9.400 42.500 Q24 48.500 38.600 42.500 L42.400 12 Z" fill="url(#tb11)"/><path d="M9.900 42.300 Q24 48 38.100 42.300" fill="none" stroke="#f6f6f6" stroke-width="1.700"/><ellipse cx="24" cy="10.600" rx="18.300" ry="7.300" fill="url(#ti11)" stroke="#4a4a4a" stroke-width=".8"/><ellipse cx="24" cy="10.600" rx="17.300" ry="6.400" fill="none" stroke="#f4f4f4" stroke-width="2"/><ellipse cx="24" cy="11" rx="15.800" ry="5" fill="url(#tp11)" opacity=".8"/><path d="M5.800 13.800 Q24 24.300 42.200 13.800" fill="none" stroke="#dcdcdc" stroke-width="2.300"/><path d="M5.700 12.300 Q24 22.600 42.300 12.300" fill="none" stroke="#fafafa" stroke-width="1.300"/></symbol>
<symbol id="drive24" viewBox="0 0 24 24"><defs><linearGradient id="dr12" x1="0" y1="0" x2="0" y2="1"><stop offset="0" stop-color="#d4d4d4"/><stop offset="1" stop-color="#f2f2f2"/></linearGradient><linearGradient id="df12" x1="0" y1="0" x2="0" y2="1"><stop offset="0" stop-color="#f0f0f0"/><stop offset="1" stop-color="#cdcdcd"/></linearGradient></defs><path d="M1.500 21.300h21" stroke="#333" stroke-width="1.500" opacity=".6" stroke-linecap="round"/><path d="M5.800 5.200h12.400q.9 0 1.200.9l2.900 9.200h-20.600l2.900-9.200q.3-.9 1.200-.9z" fill="url(#dr12)" stroke="#868686" stroke-width=".9" stroke-linejoin="round"/><path d="M7.300 7.800h9.400l1.300 4.800h-12z" fill="#e2e2e2" stroke="#bdbdbd" stroke-width=".8" stroke-linejoin="round"/><rect x="1.500" y="15.200" width="21" height="5.600" rx="1.100" fill="url(#df12)" stroke="#868686" stroke-width=".9"/><path d="M3.500 18h11.500" stroke="#fbfbfb" stroke-width="1.300" stroke-linecap="round"/><path d="M3.500 19h11.500" stroke="#b4b4b4" stroke-width=".5"/></symbol>
<symbol id="cd24" viewBox="0 0 24 24"><defs><linearGradient id="cd13" x1="0" y1="0" x2="1" y2="1"><stop offset="0" stop-color="#ffffff"/><stop offset=".35" stop-color="#dcdcdc"/><stop offset=".6" stop-color="#c4c4c4"/><stop offset="1" stop-color="#f6f6f6"/></linearGradient></defs><ellipse cx="12" cy="13.300" rx="10" ry="9.800" fill="#000" opacity=".22"/><circle cx="12" cy="12" r="9.800" fill="url(#cd13)" stroke="#8c8c8c" stroke-width=".9"/><path d="M12 12 L5 5.500 A9.500 9.500 0 0 1 11 2.600Z" fill="#fff" opacity=".55"/><path d="M12 12 L19 18.500 A9.500 9.500 0 0 1 13 21.400Z" fill="#fff" opacity=".45"/><circle cx="12" cy="12" r="4.300" fill="#e4e4e4" stroke="#a6a6a6" stroke-width=".8"/><circle cx="12" cy="12" r="1.800" fill="#fafafa" stroke="#8a8a8a" stroke-width=".8"/></symbol>
<symbol id="net48" viewBox="0 0 48 48"><defs><linearGradient id="ns14" x1="0" y1="0" x2="0" y2="1"><stop offset="0" stop-color="#163f8c"/><stop offset=".6" stop-color="#2a5fb0"/><stop offset="1" stop-color="#4179c4"/></linearGradient></defs><rect x="3.5" y="5.4" width="19" height="12.3" rx="1.200" fill="#f0f0f0" stroke="#7a7a7a" stroke-width="1"/><rect x="5.3" y="7.2" width="15.4" height="7.9" fill="url(#ns14)" stroke="#0f2f6e" stroke-width=".7"/><rect x="25.9" y="5.4" width="19" height="12.3" rx="1.200" fill="#f0f0f0" stroke="#7a7a7a" stroke-width="1"/><rect x="27.7" y="7.2" width="15.4" height="7.9" fill="url(#ns14)" stroke="#0f2f6e" stroke-width=".7"/><path d="M3.500 25.500q0-2 3-2.200h3M44.500 25.500q0-2-3-2.200h-3" fill="none" stroke="#b0b0b0" stroke-width="1.400"/><path d="M3.200 26h6M38.800 26h6" stroke="#d6d6d6" stroke-width="1.600"/><rect x="8.7" y="11.7" width="30.4" height="18.5" rx="1.200" fill="#f0f0f0" stroke="#7a7a7a" stroke-width="1"/><rect x="10.5" y="13.5" width="26.799999999999997" height="14.1" fill="url(#ns14)" stroke="#0f2f6e" stroke-width=".7"/><path d="M20 13.800h6l-5 14h-4z" fill="#fff" opacity=".14"/><path d="M28 13.800h3l-5 14h-2z" fill="#fff" opacity=".10"/><path d="M28 35q6 .3 8.500-1.500h3" fill="none" stroke="#cfcfcf" stroke-width=".9"/><path d="M20 30.500h8l1.600 4.300h-11.200z" fill="#e6e6e6" stroke="#9a9a9a" stroke-width=".7"/><rect x="17.200" y="34.200" width="13.600" height="1.800" rx=".9" fill="#fcfcfc" stroke="#9c9c9c" stroke-width=".6"/><path d="M11.300 37.200h25.400l2.300 5.300h-30z" fill="#f2f2f2" stroke="#858585" stroke-width=".9" stroke-linejoin="round"/><path d="M12.300 38.700h23.400M11.600 40.200h24.800" stroke="#8a8a8a" stroke-width=".9" stroke-dasharray="1.200 .6"/></symbol>
<symbol id="net16" viewBox="0 0 16 16"><defs><linearGradient id="ns15" x1="0" y1="0" x2="0" y2="1"><stop offset="0" stop-color="#163f8c"/><stop offset="1" stop-color="#3f78c4"/></linearGradient></defs><path d="M.8 11.700h3.500" stroke="#777" stroke-width="1.200"/><rect x=".9" y=".7" width="11.600" height="9.600" rx=".9" fill="#ededed" stroke="#585858" stroke-width=".9"/><rect x="2.400" y="2.200" width="8.600" height="6.200" fill="url(#ns15)" stroke="#0f2f6e" stroke-width=".5"/><rect x="4.200" y="4.700" width="11.300" height="9" rx=".9" fill="#f2f2f2" stroke="#585858" stroke-width=".9"/><rect x="5.700" y="6.200" width="8.300" height="5.600" fill="url(#ns15)" stroke="#0f2f6e" stroke-width=".5"/><path d="M6.300 6.700h3l-1.500 4.600h-1.500z" fill="#fff" opacity=".16"/><rect x="3.800" y="14.500" width="11.800" height="1.300" rx=".4" fill="#f4f4f4" stroke="#6a6a6a" stroke-width=".6"/></symbol>
</defs></svg>

<svg class="i" style="left:0;top:0" width="1273" height="799" viewBox="0 0 1273 799">
<defs>
<linearGradient id="wt" x1="0" x2="1" y1="0" y2="0">
 <stop offset="0" stop-color="#9a9799"/><stop offset=".18" stop-color="#999190"/><stop offset=".33" stop-color="#988c88"/><stop offset=".5" stop-color="#8a7f7a"/>
 <stop offset=".72" stop-color="#6f6563"/><stop offset=".86" stop-color="#565157"/><stop offset="1" stop-color="#423f49"/>
</linearGradient>
<linearGradient id="wm" x1="0" x2="1" y1="0" y2="0">
 <stop offset="0" stop-color="#817978"/><stop offset=".4" stop-color="#7a6a5e"/>
 <stop offset=".74" stop-color="#6f5b49"/><stop offset=".84" stop-color="#55463f"/><stop offset=".92" stop-color="#413a3e"/><stop offset="1" stop-color="#3c3842"/>
</linearGradient>
<linearGradient id="wl" x1="0" x2="0" y1="0" y2="790" gradientUnits="userSpaceOnUse">
 <stop offset="0" stop-color="#9c999b"/><stop offset=".06" stop-color="#9b989a"/><stop offset=".2" stop-color="#8f8b8d"/><stop offset=".43" stop-color="#7f7673"/>
 <stop offset=".7" stop-color="#5f5352"/><stop offset="1" stop-color="#3a3034"/>
</linearGradient>
<linearGradient id="ml" x1="116" x2="150" y1="0" y2="0" gradientUnits="userSpaceOnUse">
 <stop offset="0" stop-color="#fff" stop-opacity="1"/><stop offset="1" stop-color="#fff" stop-opacity="0"/>
</linearGradient>
<mask id="kl"><rect width="1273" height="799" fill="url(#ml)"/></mask>
<linearGradient id="wd" x1="780" y1="600" x2="1273" y2="860" gradientUnits="userSpaceOnUse">
 <stop offset="0" stop-color="#f3e3bc"/><stop offset=".3" stop-color="#efd9ac"/><stop offset=".6" stop-color="#e9c285"/>
 <stop offset=".85" stop-color="#efb055"/><stop offset="1" stop-color="#f4a234"/>
</linearGradient>
<linearGradient id="m1" x1="0" x2="0" y1="26" y2="290" gradientUnits="userSpaceOnUse">
 <stop offset="0" stop-color="#fff" stop-opacity="0"/><stop offset="1" stop-color="#fff" stop-opacity="1"/>
</linearGradient>
<linearGradient id="r1" x1="1020" y1="250" x2="1273" y2="180" gradientUnits="userSpaceOnUse">
 <stop offset="0" stop-color="#a89080" stop-opacity=".22"/><stop offset="1" stop-color="#c8c8d0" stop-opacity=".2"/>
</linearGradient>
<mask id="k1"><rect width="1273" height="799" fill="url(#m1)"/></mask>
<filter id="bl" x="-20%" y="-50%" width="140%" height="200%"><feGaussianBlur stdDeviation="1.2"/></filter>
<filter id="bl2" x="-20%" y="-50%" width="140%" height="200%"><feGaussianBlur stdDeviation="5"/></filter>
</defs>
<rect width="1273" height="799" fill="url(#wt)"/>
<rect width="1273" height="799" fill="url(#wm)" mask="url(#k1)"/>
<rect x="0" y="0" width="200" height="799" fill="url(#wl)" mask="url(#kl)"/>
<polygon points="1006,256 1273,110 1273,256" fill="url(#r1)"/>
<polygon points="1168,256 1273,170 1273,256" fill="#fff" opacity=".13"/>
<rect x="810" y="670" width="463" height="129" fill="url(#wd)"/>
<polygon points="810,728 930,670 850,670 810,692" fill="#fff" opacity=".45" filter="url(#bl2)"/>
<path d="M814 718 L880 689.500 L912 673" stroke="#fff" stroke-width="3.600" fill="none" filter="url(#bl)" opacity=".95"/>
</svg>

<svg class="i" style="left:61px;top:48px;" width="48" height="48"><use href="#comp48"/></svg>
<span class="t" style="left:49.19px;top:97px;color:#fff;letter-spacing:0.6px;text-shadow:1px 1px 1px rgba(0,0,0,.85);">Компьютер</span>
<div style="position:absolute;left:27px;top:177px;width:118px;height:37px;background:rgba(255,255,255,.24);border-radius:4px;"></div>
<svg class="i" style="left:61px;top:128px;" width="48" height="48"><use href="#f_home_d"/></svg>
<span class="t" style="left:32.54px;top:177px;color:#fff;letter-spacing:0.3px;">Домашняя папка</span>
<span class="t" style="left:73.2px;top:194px;color:#fff;letter-spacing:0.04px;">user</span>
<svg class="i" style="left:61px;top:229px;" width="48" height="48"><use href="#trash48"/></svg>
<span class="t" style="left:59.29px;top:277px;color:#fff;letter-spacing:0.31px;text-shadow:1px 1px 1px rgba(0,0,0,.85);">Корзина</span>
<div class="win" style="left:465px;top:169px;width:500px;height:330px;">
<div class="wb" style="left:451px;top:5px"></div>
<svg class="i" style="left:451px;top:5px;" width="17" height="17"><use href="#wb_max"/></svg>
<div class="wb" style="left:476px;top:5px"></div>
<svg class="i" style="left:476px;top:5px;" width="17" height="17"><use href="#wb_close"/></svg>
<div class="abs" style="left:0;right:0;top:53px;bottom:0;background:#d3d3d3"></div>
<div class="abs" style="left:0;right:14px;top:53px;bottom:0;background:#ffffdd"></div>
<svg class="i" style="left:489px;top:59.500px" width="8" height="5"><path d="M0 5h8l-4-5z" fill="#9c9c9c"/></svg>
<div class="abs" style="left:487px;top:72px;width:12px;height:120px;border-radius:6px;background:linear-gradient(90deg,#b4b4b4,#c2c2c2 45%,#adadad);border:1px solid #a2a2a2"></div>
</div>
<div class="win" style="left:120px;top:48px;width:800px;height:320px;">
<div class="wm" style="left:9px;top:7px"></div>
<span class="t" style="left:364.31px;top:3px;color:#858585;font-weight:bold;font-size:14.2px;letter-spacing:-0.42px;text-shadow:0 1px 0 rgba(255,255,255,.8);">Компьютер</span>
<div class="wb" style="left:726px;top:5px"></div>
<svg class="i" style="left:726px;top:5px;" width="17" height="17"><use href="#wb_min"/></svg>
<div class="wb" style="left:751px;top:5px"></div>
<svg class="i" style="left:751px;top:5px;" width="17" height="17"><use href="#wb_max"/></svg>
<div class="wb" style="left:776px;top:5px"></div>
<svg class="i" style="left:776px;top:5px;" width="17" height="17"><use href="#wb_close"/></svg>
<span class="t" style="left:5.89px;top:30px;color:#878787;letter-spacing:0.04px;">Файл</span>
<span class="t" style="left:50.31px;top:30px;color:#878787;letter-spacing:0.12px;">Правка</span>
<span class="t" style="left:108.51px;top:30px;color:#878787;letter-spacing:-1.17px;">Вид</span>
<span class="t" style="left:143.39px;top:30px;color:#878787;letter-spacing:-0.02px;">Переход</span>
<span class="t" style="left:207.89px;top:30px;color:#878787;letter-spacing:-0.03px;">Закладки</span>
<span class="t" style="left:277.31px;top:30px;color:#878787;letter-spacing:0.64px;">Помощь</span>
<div class="tb"></div>
<svg class="i" style="left:9px;top:63px;" width="24" height="24"><use href="#back"/></svg>
<span class="t" style="left:37.31px;top:65px;color:#878787;letter-spacing:-0.55px;">Назад</span>
<svg class="i" style="left:89.2px;top:72.7px" width="9.6" height="5.4" viewBox="0 0 10 6" preserveAspectRatio="none"><path d="M0 0h10l-5 6z" fill="#8a8a8a"/></svg>
<svg class="i" style="left:115px;top:63px;" width="24" height="24"><use href="#fwd"/></svg>
<span class="t" style="left:143.1px;top:65px;color:#878787;letter-spacing:-0.16px;">Вперёд</span>
<svg class="i" style="left:204.2px;top:72.7px" width="9.6" height="5.4" viewBox="0 0 10 6" preserveAspectRatio="none"><path d="M0 0h10l-5 6z" fill="#8a8a8a"/></svg>
<svg class="i" style="left:230px;top:63px;" width="24" height="24"><use href="#up"/></svg>
<svg class="i" style="left:269px;top:63px;" width="24" height="24"><use href="#stop"/></svg>
<svg class="i" style="left:307px;top:63px;" width="24" height="24"><use href="#reload"/></svg>
<svg class="i" style="left:347px;top:65px;" width="20" height="20"><use href="#tb_home"/></svg>
<svg class="i" style="left:383px;top:63px;" width="24" height="24"><use href="#tb_comp"/></svg>
<svg class="i" style="left:421px;top:67px;" width="16" height="16"><use href="#zout"/></svg>
<span class="t" style="left:453.18px;top:65px;color:#878787;letter-spacing:-1.13px;">50%</span>
<svg class="i" style="left:495px;top:67px;" width="16" height="16"><use href="#zin"/></svg>
<div class="btn" style="left:519px;top:59px;width:190px;height:31px"></div>
<span class="t" style="left:526.21px;top:65px;color:#878787;letter-spacing:-0.07px;">В виде списка</span>
<svg class="i" style="left:691px;top:72.5px" width="9.6" height="5.4" viewBox="0 0 10 6" preserveAspectRatio="none"><path d="M0 0h10l-5 6z" fill="#8a8a8a"/></svg>
<svg class="i" style="left:715px;top:63px;" width="24" height="24"><use href="#search"/></svg>
<div class="lb"></div>
<div class="btn" style="left:5px;top:103px;width:138px;height:32px"></div>
<div class="abs" style="left:115px;top:104px;width:1px;height:30px;background:#c0c0c0;box-shadow:1px 0 0 #ececec"></div>
<span class="t" style="left:9.6px;top:109px;color:#878787;letter-spacing:0.24px;">Точки входа</span>
<svg class="i" style="left:99.2px;top:116.7px" width="9.6" height="5.4" viewBox="0 0 10 6" preserveAspectRatio="none"><path d="M0 0h10l-5 6z" fill="#7c7c7c"/></svg>
<svg class="i" style="left:123px;top:113px;" width="12" height="12"><use href="#xclear"/></svg>
<div class="btn" style="left:156px;top:103px;width:30px;height:32px"></div>
<svg class="i" style="left:163px;top:111px;" width="17" height="17"><use href="#edit"/></svg>
<div class="btn" style="left:201px;top:103px;width:143px;height:32px;background:linear-gradient(#d4d4d4,#cbcbcb);box-shadow:0 1px 1px rgba(0,0,0,.16)"></div>
<div class="abs" style="left:220px;top:104px;width:105px;height:30px;background:linear-gradient(#a8a8a8,#b3b3b3 4px,#b8b8b8);box-shadow:inset 0 1px 0 #9a9a9a"></div>
<svg class="i" style="left:208.1px;top:114.1px" width="5.2" height="9.6" viewBox="0 0 6 10" preserveAspectRatio="none"><path d="M6 0v10l-6-5z" fill="#8a8a8a"/></svg>
<svg class="i" style="left:332px;top:114.1px" width="5.2" height="9.6" viewBox="0 0 6 10" preserveAspectRatio="none"><path d="M0 0v10l6-5z" fill="#8a8a8a"/></svg>
<svg class="i" style="left:225px;top:111px;" width="16" height="16"><use href="#comp16"/></svg>
<span class="t" style="left:243.41px;top:108px;color:#7e7e7e;font-weight:bold;font-size:14.2px;letter-spacing:-0.42px;text-shadow:0 1px 0 rgba(255,255,255,.35);">Компьютер</span>
<div class="body"></div>
<div class="side" style="left:0;top:140px;width:148px;bottom:0"></div>
<span class="t" style="left:13.21px;top:150px;color:#7e7e7e;font-weight:bold;font-size:14.2px;letter-spacing:-0.42px;">Компьютер</span>
<svg class="i" style="left:19px;top:185px;" width="16" height="16"><use href="#s_home"/></svg>
<span class="t" style="left:37.3px;top:184px;color:#878787;letter-spacing:0.04px;">user</span>
<svg class="i" style="left:19px;top:210px;" width="16" height="16"><use href="#s_desk"/></svg>
<span class="t" style="left:37.21px;top:209px;color:#878787;letter-spacing:0.18px;">Рабочий стол</span>
<svg class="i" style="left:19px;top:235px;" width="16" height="16"><use href="#s_drive"/></svg>
<span class="t" style="left:37.19px;top:234px;color:#878787;letter-spacing:0.1px;">Файловая сист...</span>
<svg class="i" style="left:19px;top:260px;" width="16" height="16"><use href="#s_docs"/></svg>
<span class="t" style="left:38.14px;top:259px;color:#878787;letter-spacing:0.37px;">Документы</span>
<svg class="i" style="left:19px;top:285px;" width="16" height="16"><use href="#s_down"/></svg>
<span class="t" style="left:37.17px;top:284px;color:#878787;letter-spacing:0.24px;">Загрузки</span>
<svg class="i" style="left:19px;top:310px;" width="16" height="16"><use href="#s_music"/></svg>
<span class="t" style="left:37.21px;top:309px;color:#878787;letter-spacing:0.32px;">Музыка</span>
<svg class="i" style="left:19px;top:335px;" width="16" height="16"><use href="#s_pics"/></svg>
<span class="t" style="left:37.2px;top:334px;color:#878787;letter-spacing:0.28px;">Изображения</span>
<svg class="i" style="left:19px;top:360px;" width="16" height="16"><use href="#s_video"/></svg>
<span class="t" style="left:37.21px;top:359px;color:#878787;letter-spacing:-0.34px;">Видео</span>
<svg class="i" style="left:19px;top:385px;" width="16" height="16"><use href="#s_trash"/></svg>
<span class="t" style="left:37.19px;top:384px;color:#878787;letter-spacing:0.31px;">Корзина</span>
<span class="t" style="left:13.21px;top:415px;color:#7e7e7e;font-weight:bold;font-size:14.2px;letter-spacing:-0.54px;">Устройства</span>
<div class="main" style="left:151px;top:140px;width:648px;bottom:-2px"></div>
<div class="hdr" style="left:152px;top:141px;width:646px"></div>
<div class="abs" style="left:484px;top:142px;width:1px;height:20px;background:#bfbfbf;box-shadow:1px 0 0 #ececec"></div>
<div class="abs" style="left:557px;top:142px;width:1px;height:20px;background:#bfbfbf;box-shadow:1px 0 0 #ececec"></div>
<div class="abs" style="left:670px;top:142px;width:1px;height:20px;background:#bfbfbf;box-shadow:1px 0 0 #ececec"></div>
<span class="t" style="left:156.01px;top:142px;color:#878787;letter-spacing:0.61px;">Имя</span>
<svg class="i" style="left:467.400px;top:149.700px" width="9.200" height="5.200" viewBox="0 0 10 6"><path d="M0 0h10l-5 6z" fill="#8a8a8a"/></svg>
<span class="t" style="left:488.99px;top:142px;color:#878787;letter-spacing:-0.04px;">Размер</span>
<span class="t" style="left:562.4px;top:142px;color:#878787;letter-spacing:0.22px;">Тип</span>
<span class="t" style="left:675.54px;top:142px;color:#878787;letter-spacing:0.1px;">Дата изменения</span>
<svg class="i" style="left:164px;top:163px;" width="24" height="24"><use href="#cd24"/></svg>
<span class="t" style="left:192.05px;top:165px;color:#878787;letter-spacing:-0.19px;">QEMU DVD-ROM: ALT SP Workstation</span>
<span class="t" style="left:547.25px;top:165px;color:#878787;letter-spacing:0.3px;">--</span>
<span class="t" style="left:561.17px;top:165px;color:#878787;letter-spacing:0.25px;">неизвестный тип</span>
<span class="t" style="left:674.18px;top:165px;color:#878787;letter-spacing:0.17px;">неизвестно</span>
<svg class="i" style="left:164px;top:187px;" width="24" height="24"><use href="#drive24"/></svg>
<span class="t" style="left:192.04px;top:189px;color:#878787;letter-spacing:-0.58px;">QEMU QEMU HARDDISK</span>
<span class="t" style="left:547.25px;top:189px;color:#878787;letter-spacing:0.3px;">--</span>
<span class="t" style="left:561.17px;top:189px;color:#878787;letter-spacing:0.25px;">неизвестный тип</span>
<span class="t" style="left:674.18px;top:189px;color:#878787;letter-spacing:0.17px;">неизвестно</span>
<svg class="i" style="left:164px;top:211px;" width="24" height="24"><use href="#drive24"/></svg>
<span class="t" style="left:191.99px;top:213px;color:#878787;letter-spacing:-0.02px;">Файловая система</span>
<span class="t" style="left:547.25px;top:213px;color:#878787;letter-spacing:0.3px;">--</span>
<span class="t" style="left:561.17px;top:213px;color:#878787;letter-spacing:0.25px;">неизвестный тип</span>
<span class="t" style="left:674.18px;top:213px;color:#878787;letter-spacing:0.17px;">неизвестно</span>
</div>
<div class="win" style="left:18px;top:340px;width:800px;height:470px;">
<div class="wm" style="left:9px;top:7px"></div>
<span class="t" style="left:388.63px;top:3px;color:#858585;font-weight:bold;font-size:14.2px;letter-spacing:-0.63px;text-shadow:0 1px 0 rgba(255,255,255,.8);">user</span>
<div class="wb" style="left:726px;top:5px"></div>
<svg class="i" style="left:726px;top:5px;" width="17" height="17"><use href="#wb_min"/></svg>
<div class="wb" style="left:751px;top:5px"></div>
<svg class="i" style="left:751px;top:5px;" width="17" height="17"><use href="#wb_max"/></svg>
<div class="wb" style="left:776px;top:5px"></div>
<svg class="i" style="left:776px;top:5px;" width="17" height="17"><use href="#wb_close"/></svg>
<span class="t" style="left:5.89px;top:30px;color:#878787;letter-spacing:0.04px;">Файл</span>
<span class="t" style="left:50.31px;top:30px;color:#878787;letter-spacing:0.12px;">Правка</span>
<span class="t" style="left:108.51px;top:30px;color:#878787;letter-spacing:-1.17px;">Вид</span>
<span class="t" style="left:143.39px;top:30px;color:#878787;letter-spacing:-0.02px;">Переход</span>
<span class="t" style="left:207.89px;top:30px;color:#878787;letter-spacing:-0.03px;">Закладки</span>
<span class="t" style="left:277.31px;top:30px;color:#878787;letter-spacing:0.64px;">Помощь</span>
<div class="tb"></div>
<svg class="i" style="left:9px;top:63px;" width="24" height="24"><use href="#back"/></svg>
<span class="t" style="left:37.31px;top:65px;color:#878787;letter-spacing:-0.55px;">Назад</span>
<svg class="i" style="left:89.2px;top:72.7px" width="9.6" height="5.4" viewBox="0 0 10 6" preserveAspectRatio="none"><path d="M0 0h10l-5 6z" fill="#8a8a8a"/></svg>
<svg class="i" style="left:115px;top:63px;" width="24" height="24"><use href="#fwd"/></svg>
<span class="t" style="left:143.1px;top:65px;color:#878787;letter-spacing:-0.16px;">Вперёд</span>
<svg class="i" style="left:204.2px;top:72.7px" width="9.6" height="5.4" viewBox="0 0 10 6" preserveAspectRatio="none"><path d="M0 0h10l-5 6z" fill="#8a8a8a"/></svg>
<svg class="i" style="left:230px;top:63px;" width="24" height="24"><use href="#up"/></svg>
<svg class="i" style="left:269px;top:63px;" width="24" height="24"><use href="#stop"/></svg>
<svg class="i" style="left:307px;top:63px;" width="24" height="24"><use href="#reload"/></svg>
<svg class="i" style="left:347px;top:65px;" width="20" height="20"><use href="#tb_home"/></svg>
<svg class="i" style="left:383px;top:63px;" width="24" height="24"><use href="#tb_comp"/></svg>
<svg class="i" style="left:421px;top:67px;" width="16" height="16"><use href="#zout"/></svg>
<span class="t" style="left:449.64px;top:65px;color:#878787;letter-spacing:-0.63px;">100%</span>
<svg class="i" style="left:495px;top:67px;" width="16" height="16"><use href="#zin"/></svg>
<div class="btn" style="left:519px;top:59px;width:190px;height:31px"></div>
<span class="t" style="left:526.19px;top:65px;color:#878787;letter-spacing:0.2px;">Просмотр в виде значков</span>
<svg class="i" style="left:691px;top:72.5px" width="9.6" height="5.4" viewBox="0 0 10 6" preserveAspectRatio="none"><path d="M0 0h10l-5 6z" fill="#8a8a8a"/></svg>
<svg class="i" style="left:715px;top:63px;" width="24" height="24"><use href="#search"/></svg>
<div class="lb"></div>
<div class="btn" style="left:5px;top:103px;width:138px;height:32px"></div>
<div class="abs" style="left:115px;top:104px;width:1px;height:30px;background:#c0c0c0;box-shadow:1px 0 0 #ececec"></div>
<span class="t" style="left:9.6px;top:109px;color:#878787;letter-spacing:0.24px;">Точки входа</span>
<svg class="i" style="left:99.2px;top:116.7px" width="9.6" height="5.4" viewBox="0 0 10 6" preserveAspectRatio="none"><path d="M0 0h10l-5 6z" fill="#7c7c7c"/></svg>
<svg class="i" style="left:123px;top:113px;" width="12" height="12"><use href="#xclear"/></svg>
<div class="btn" style="left:156px;top:103px;width:30px;height:32px"></div>
<svg class="i" style="left:163px;top:111px;" width="17" height="17"><use href="#edit"/></svg>
<div class="btn" style="left:201px;top:103px;width:94px;height:32px;background:linear-gradient(#d4d4d4,#cbcbcb);box-shadow:0 1px 1px rgba(0,0,0,.16)"></div>
<div class="abs" style="left:220px;top:104px;width:56px;height:30px;background:linear-gradient(#a8a8a8,#b3b3b3 4px,#b8b8b8);box-shadow:inset 0 1px 0 #9a9a9a"></div>
<svg class="i" style="left:208.1px;top:114.1px" width="5.2" height="9.6" viewBox="0 0 6 10" preserveAspectRatio="none"><path d="M6 0v10l-6-5z" fill="#8a8a8a"/></svg>
<svg class="i" style="left:283px;top:114.1px" width="5.2" height="9.6" viewBox="0 0 6 10" preserveAspectRatio="none"><path d="M0 0v10l6-5z" fill="#8a8a8a"/></svg>
<svg class="i" style="left:225px;top:111px;" width="16" height="16"><use href="#s_home"/></svg>
<span class="t" style="left:243.43px;top:108px;color:#7e7e7e;font-weight:bold;font-size:14.2px;letter-spacing:-0.63px;text-shadow:0 1px 0 rgba(255,255,255,.35);">user</span>
<div class="body"></div>
<div class="side" style="left:0;top:140px;width:148px;bottom:0"></div>
<div class="abs" style="left:1px;width:146px;top:181px;height:25px;background:#cecece"></div>
<span class="t" style="left:13.21px;top:150px;color:#7e7e7e;font-weight:bold;font-size:14.2px;letter-spacing:-0.42px;">Компьютер</span>
<svg class="i" style="left:19px;top:185px;" width="16" height="16"><use href="#s_home"/></svg>
<span class="t" style="left:37.3px;top:184px;color:#878787;letter-spacing:0.04px;">user</span>
<svg class="i" style="left:19px;top:210px;" width="16" height="16"><use href="#s_desk"/></svg>
<span class="t" style="left:37.21px;top:209px;color:#878787;letter-spacing:0.18px;">Рабочий стол</span>
<svg class="i" style="left:19px;top:235px;" width="16" height="16"><use href="#s_drive"/></svg>
<span class="t" style="left:37.19px;top:234px;color:#878787;letter-spacing:0.1px;">Файловая сист...</span>
<svg class="i" style="left:19px;top:260px;" width="16" height="16"><use href="#s_docs"/></svg>
<span class="t" style="left:38.14px;top:259px;color:#878787;letter-spacing:0.37px;">Документы</span>
<svg class="i" style="left:19px;top:285px;" width="16" height="16"><use href="#s_down"/></svg>
<span class="t" style="left:37.17px;top:284px;color:#878787;letter-spacing:0.24px;">Загрузки</span>
<svg class="i" style="left:19px;top:310px;" width="16" height="16"><use href="#s_music"/></svg>
<span class="t" style="left:37.21px;top:309px;color:#878787;letter-spacing:0.32px;">Музыка</span>
<svg class="i" style="left:19px;top:335px;" width="16" height="16"><use href="#s_pics"/></svg>
<span class="t" style="left:37.2px;top:334px;color:#878787;letter-spacing:0.28px;">Изображения</span>
<svg class="i" style="left:19px;top:360px;" width="16" height="16"><use href="#s_video"/></svg>
<span class="t" style="left:37.21px;top:359px;color:#878787;letter-spacing:-0.34px;">Видео</span>
<svg class="i" style="left:19px;top:385px;" width="16" height="16"><use href="#s_trash"/></svg>
<span class="t" style="left:37.19px;top:384px;color:#878787;letter-spacing:0.31px;">Корзина</span>
<span class="t" style="left:13.21px;top:415px;color:#7e7e7e;font-weight:bold;font-size:14.2px;letter-spacing:-0.54px;">Устройства</span>
<div class="main" style="left:151px;top:140px;width:648px;bottom:-2px"></div>
<svg class="i" style="left:212px;top:148px;" width="48" height="48"><use href="#f_video"/></svg>
<span class="t" style="left:217.91px;top:197px;color:#878787;letter-spacing:-0.34px;">Видео</span>
<svg class="i" style="left:372px;top:148px;" width="48" height="48"><use href="#f_docs"/></svg>
<span class="t" style="left:361.64px;top:197px;color:#878787;letter-spacing:0.37px;">Документы</span>
<svg class="i" style="left:532px;top:148px;" width="48" height="48"><use href="#f_down"/></svg>
<span class="t" style="left:529.27px;top:197px;color:#878787;letter-spacing:0.24px;">Загрузки</span>
<svg class="i" style="left:692px;top:148px;" width="48" height="48"><use href="#f_pics"/></svg>
<span class="t" style="left:673.75px;top:197px;color:#878787;letter-spacing:0.28px;">Изображения</span>
<svg class="i" style="left:212px;top:225px;" width="48" height="48"><use href="#f_music"/></svg>
<span class="t" style="left:212.41px;top:274px;color:#878787;letter-spacing:0.32px;">Музыка</span>
<svg class="i" style="left:372px;top:225px;" width="48" height="48"><use href="#f_desk"/></svg>
<span class="t" style="left:354.21px;top:274px;color:#878787;letter-spacing:0.18px;">Рабочий стол</span>
<svg class="i" style="left:532px;top:225px;" width="48" height="48"><use href="#f_tmpl"/></svg>
<span class="t" style="left:526.4px;top:274px;color:#878787;letter-spacing:0.39px;">Шаблоны</span>
</div>
<div class="win act" style="left:728px;top:249px;width:669px;height:426.5px;">
<div class="wm" style="left:9px;top:7px"></div>
<span class="t" style="left:321.34px;top:3px;color:#2a2a2a;font-weight:bold;font-size:14.2px;letter-spacing:-0.72px;text-shadow:0 1px 0 rgba(255,255,255,.8);">Сеть</span>
<div class="wb" style="left:595px;top:5px"></div>
<svg class="i" style="left:595px;top:5px;" width="17" height="17"><use href="#wb_min"/></svg>
<div class="wb" style="left:620px;top:5px"></div>
<svg class="i" style="left:620px;top:5px;" width="17" height="17"><use href="#wb_max"/></svg>
<div class="wb" style="left:645px;top:5px"></div>
<svg class="i" style="left:645px;top:5px;" width="17" height="17"><use href="#wb_close"/></svg>
<span class="t" style="left:5.89px;top:30px;color:#2e2e2e;letter-spacing:0.04px;">Файл</span>
<span class="t" style="left:50.31px;top:30px;color:#2e2e2e;letter-spacing:0.12px;">Правка</span>
<span class="t" style="left:108.51px;top:30px;color:#2e2e2e;letter-spacing:-1.17px;">Вид</span>
<span class="t" style="left:143.39px;top:30px;color:#2e2e2e;letter-spacing:-0.02px;">Переход</span>
<span class="t" style="left:207.89px;top:30px;color:#2e2e2e;letter-spacing:-0.03px;">Закладки</span>
<span class="t" style="left:277.31px;top:30px;color:#2e2e2e;letter-spacing:0.64px;">Помощь</span>
<div class="tb"></div>
<svg class="i" style="left:9px;top:63px;" width="24" height="24"><use href="#back"/></svg>
<span class="t" style="left:37.31px;top:65px;color:#878787;letter-spacing:-0.55px;">Назад</span>
<svg class="i" style="left:89.2px;top:72.7px" width="9.6" height="5.4" viewBox="0 0 10 6" preserveAspectRatio="none"><path d="M0 0h10l-5 6z" fill="#8a8a8a"/></svg>
<svg class="i" style="left:115px;top:63px;" width="24" height="24"><use href="#fwd"/></svg>
<span class="t" style="left:143.1px;top:65px;color:#878787;letter-spacing:-0.16px;">Вперёд</span>
<svg class="i" style="left:204.2px;top:72.7px" width="9.6" height="5.4" viewBox="0 0 10 6" preserveAspectRatio="none"><path d="M0 0h10l-5 6z" fill="#8a8a8a"/></svg>
<svg class="i" style="left:230px;top:63px;" width="24" height="24"><use href="#up"/></svg>
<svg class="i" style="left:269px;top:63px;" width="24" height="24"><use href="#stop"/></svg>
<svg class="i" style="left:307px;top:63px;" width="24" height="24"><use href="#reload"/></svg>
<svg class="i" style="left:347px;top:65px;" width="20" height="20"><use href="#tb_home"/></svg>
<svg class="i" style="left:383px;top:63px;" width="24" height="24"><use href="#tb_comp"/></svg>
<svg class="i" style="left:421px;top:67px;" width="16" height="16"><use href="#zout"/></svg>
<span class="t" style="left:449.84px;top:65px;color:#2e2e2e;letter-spacing:-0.63px;">100%</span>
<svg class="i" style="left:495px;top:67px;" width="16" height="16"><use href="#zin"/></svg>
<div class="lb"></div>
<div class="btn" style="left:5px;top:103px;width:138px;height:32px"></div>
<div class="abs" style="left:115px;top:104px;width:1px;height:30px;background:#c0c0c0;box-shadow:1px 0 0 #ececec"></div>
<span class="t" style="left:9.6px;top:109px;color:#2e2e2e;letter-spacing:0.24px;">Точки входа</span>
<svg class="i" style="left:99.2px;top:116.7px" width="9.6" height="5.4" viewBox="0 0 10 6" preserveAspectRatio="none"><path d="M0 0h10l-5 6z" fill="#333"/></svg>
<svg class="i" style="left:123px;top:113px;" width="12" height="12"><use href="#xclear"/></svg>
<div class="btn" style="left:156px;top:103px;width:30px;height:32px"></div>
<svg class="i" style="left:163px;top:111px;" width="17" height="17"><use href="#edit"/></svg>
<div class="btn" style="left:201px;top:103px;width:98px;height:32px;background:linear-gradient(#d4d4d4,#cbcbcb);box-shadow:0 1px 1px rgba(0,0,0,.16)"></div>
<div class="abs" style="left:220px;top:104px;width:60px;height:30px;background:linear-gradient(#a8a8a8,#b3b3b3 4px,#b8b8b8);box-shadow:inset 0 1px 0 #9a9a9a"></div>
<svg class="i" style="left:208.1px;top:114.1px" width="5.2" height="9.6" viewBox="0 0 6 10" preserveAspectRatio="none"><path d="M6 0v10l-6-5z" fill="#8a8a8a"/></svg>
<svg class="i" style="left:287px;top:114.1px" width="5.2" height="9.6" viewBox="0 0 6 10" preserveAspectRatio="none"><path d="M0 0v10l6-5z" fill="#8a8a8a"/></svg>
<svg class="i" style="left:225px;top:111px;" width="16" height="16"><use href="#net16"/></svg>
<span class="t" style="left:243.49px;top:108px;color:#2a2a2a;font-weight:bold;font-size:14.2px;letter-spacing:-0.72px;text-shadow:0 1px 0 rgba(255,255,255,.35);">Сеть</span>
<div class="body"></div>
<div class="side" style="left:0;top:140px;width:148px;bottom:0"></div>
<span class="t" style="left:13.21px;top:150px;color:#2a2a2a;font-weight:bold;font-size:14.2px;letter-spacing:-0.42px;">Компьютер</span>
<svg class="i" style="left:19px;top:185px;" width="16" height="16"><use href="#s_home"/></svg>
<span class="t" style="left:37.3px;top:184px;color:#2e2e2e;letter-spacing:0.04px;">user</span>
<svg class="i" style="left:19px;top:210px;" width="16" height="16"><use href="#s_desk"/></svg>
<span class="t" style="left:37.21px;top:209px;color:#2e2e2e;letter-spacing:0.18px;">Рабочий стол</span>
<svg class="i" style="left:19px;top:235px;" width="16" height="16"><use href="#s_drive"/></svg>
<span class="t" style="left:37.19px;top:234px;color:#2e2e2e;letter-spacing:0.04px;">Файловая си...</span>
<svg class="i" style="left:19px;top:260px;" width="16" height="16"><use href="#s_docs"/></svg>
<span class="t" style="left:38.14px;top:259px;color:#2e2e2e;letter-spacing:0.37px;">Документы</span>
<svg class="i" style="left:19px;top:285px;" width="16" height="16"><use href="#s_down"/></svg>
<span class="t" style="left:37.17px;top:284px;color:#2e2e2e;letter-spacing:0.24px;">Загрузки</span>
<svg class="i" style="left:19px;top:310px;" width="16" height="16"><use href="#s_music"/></svg>
<span class="t" style="left:37.21px;top:309px;color:#2e2e2e;letter-spacing:0.32px;">Музыка</span>
<svg class="i" style="left:19px;top:335px;" width="16" height="16"><use href="#s_pics"/></svg>
<span class="t" style="left:37.2px;top:334px;color:#2e2e2e;letter-spacing:0.28px;">Изображения</span>
<svg class="i" style="left:19px;top:360px;" width="16" height="16"><use href="#s_video"/></svg>
<span class="t" style="left:37.21px;top:359px;color:#2e2e2e;letter-spacing:-0.34px;">Видео</span>
<svg class="i" style="left:19px;top:385px;" width="16" height="16"><use href="#s_trash"/></svg>
<span class="t" style="left:37.19px;top:384px;color:#2e2e2e;letter-spacing:0.31px;">Корзина</span>
<span class="t" style="left:13.21px;top:415px;color:#2a2a2a;font-weight:bold;font-size:14.2px;letter-spacing:-0.54px;">Устройства</span>
<div class="abs" style="left:133px;top:141px;bottom:0;width:15px;background:linear-gradient(90deg,#d4d4d4,#e0e0e0 40%,#dcdcdc);border-left:1px solid #c6c6c6"></div>
<div class="abs" style="left:134px;top:160px;width:14px;height:186px;border-radius:7px;background:linear-gradient(90deg,#b4b4b4,#c2c2c2 45%,#adadad);border:1px solid #9e9e9e"></div>
<svg class="i" style="left:137px;top:147px" width="8" height="5" viewBox="0 0 8 5" preserveAspectRatio="none"><path d="M0 5h8l-4-5z" fill="#a4a4a4"/></svg>
<svg class="i" style="left:136.2px;top:414px" width="8.5" height="5.5" viewBox="0 0 8 5" preserveAspectRatio="none"><path d="M0 0h8l-4 5z" fill="#333"/></svg>
<div class="main" style="left:151px;top:140px;width:517px;bottom:27px"></div>
<svg class="i" style="left:218px;top:150px;" width="48" height="48"><use href="#net48"/></svg>
<span class="t" style="left:199.02px;top:197px;color:#2e2e2e;letter-spacing:0.03px;">Сеть Windows</span>
<span class="t" style="left:165.54px;top:404px;color:#2e2e2e;letter-spacing:0.21px;">1 объект</span>
</div>
<div style="position:absolute;left:1047px;top:51px;width:76px;height:44px;background:#f5f5b5;border:1px solid #2a2a22;border-radius:2px;box-shadow:0 3px 12px 1px rgba(0,0,0,.6)"></div>
<span class="t" style="left:1060.86px;top:64px;color:#2c2c2c;letter-spacing:-0.13px;">Русская</span>
<div class="panel" style="top:0;height:27px;border-bottom:1px solid #9f9f9f">
<svg class="i" style="left:0px;top:1px;" width="24" height="24"><use href="#logo"/></svg>
<span class="t" style="left:28.21px;top:3px;color:#2c2c2c;letter-spacing:0.06px;">Приложения</span>
<span class="t" style="left:114.31px;top:3px;color:#2c2c2c;letter-spacing:-0.41px;">Места</span>
<span class="t" style="left:159.96px;top:3px;color:#2c2c2c;letter-spacing:-0.17px;">Система</span>
<div style="position:absolute;left:1044px;top:5px;width:3px;height:3px;background:#c6c6c6"></div>
<div style="position:absolute;left:1044px;top:11px;width:3px;height:3px;background:#c6c6c6"></div>
<div style="position:absolute;left:1044px;top:17px;width:3px;height:3px;background:#c6c6c6"></div>
<svg class="i" style="left:1050px;top:2px;" width="22" height="22"><use href="#lock"/></svg>
<span class="t" style="left:1079.78px;top:3px;color:#484848;letter-spacing:-0.35px;">ru</span>
<svg class="i" style="left:1099px;top:1px;" width="24" height="24"><use href="#vol"/></svg>
<svg class="i" style="left:1127px;top:2px;" width="22" height="22"><use href="#clip"/></svg>
<svg class="i" style="left:1151px;top:1px;" width="24" height="24"><use href="#netp"/></svg>
<span class="t" style="left:1180.23px;top:3px;color:#2c2c2c;letter-spacing:-0.27px;">Ср,  9 авг, 12:59</span>
</div>
<div class="panel" style="top:775px;height:24px;border-top:1px solid #b6b6b6">
<svg class="i" style="left:-3px;top:2px;" width="22" height="22"><use href="#s_desk"/></svg>
<div style="position:absolute;left:26px;top:5px;width:3px;height:3px;background:#c2c2c2"></div>
<div style="position:absolute;left:26px;top:10px;width:3px;height:3px;background:#c2c2c2"></div>
<div style="position:absolute;left:26px;top:15px;width:3px;height:3px;background:#c2c2c2"></div>
<div style="position:absolute;left:604px;top:0px;width:192px;height:24px;background:linear-gradient(#cacaca,#b3b3b3);box-shadow:inset 0 1px 1px rgba(0,0,0,.12)"></div>
<svg class="i" style="left:35px;top:5px;" width="16" height="16"><use href="#term"/></svg>
<span class="t" style="left:58.94px;top:2px;color:#2c2c2c;letter-spacing:0.21px;">user@host-229: /home/...</span>
<svg class="i" style="left:226px;top:4px;" width="16" height="16"><use href="#comp16"/></svg>
<span class="t" style="left:249.89px;top:2px;color:#2c2c2c;letter-spacing:0.6px;">Компьютер</span>
<svg class="i" style="left:417px;top:4px;" width="16" height="16"><use href="#s_home"/></svg>
<span class="t" style="left:440.9px;top:2px;color:#2c2c2c;letter-spacing:0.04px;">user</span>
<svg class="i" style="left:608px;top:4px;" width="16" height="16"><use href="#net16"/></svg>
<span class="t" style="left:632.06px;top:2px;color:#2c2c2c;letter-spacing:-0.27px;">Сеть</span>
<div style="position:absolute;left:1122px;top:0px;width:151px;height:24px;background:#969696"></div>
<div style="position:absolute;left:1122px;top:0px;width:38.5px;height:24px;background:linear-gradient(#4f76a6,#1d2a3c)"></div>
<div style="position:absolute;left:1160px;top:0px;width:1px;height:24px;background:#d8d8d8"></div>
<div style="position:absolute;left:1199px;top:0px;width:1px;height:24px;background:#d8d8d8"></div>
<div style="position:absolute;left:1238px;top:0px;width:1px;height:24px;background:#d8d8d8"></div>
<div style="position:absolute;left:1126px;top:1.5px;width:24.5px;height:12px;background:linear-gradient(#6391c8,#4a74a8);border:1px solid #a9c9ef"></div>
<div style="position:absolute;left:1123.5px;top:10.5px;width:23.5px;height:16px;background:linear-gradient(#4a76ac,#1e2e46);border:1px solid #a9c9ef"></div>
<div style="position:absolute;left:1144px;top:7.5px;width:16.5px;height:12.5px;background:linear-gradient(#8fabcc,#70747c);border:1px solid #bcd6f6"></div>
</div>
</body></html>
